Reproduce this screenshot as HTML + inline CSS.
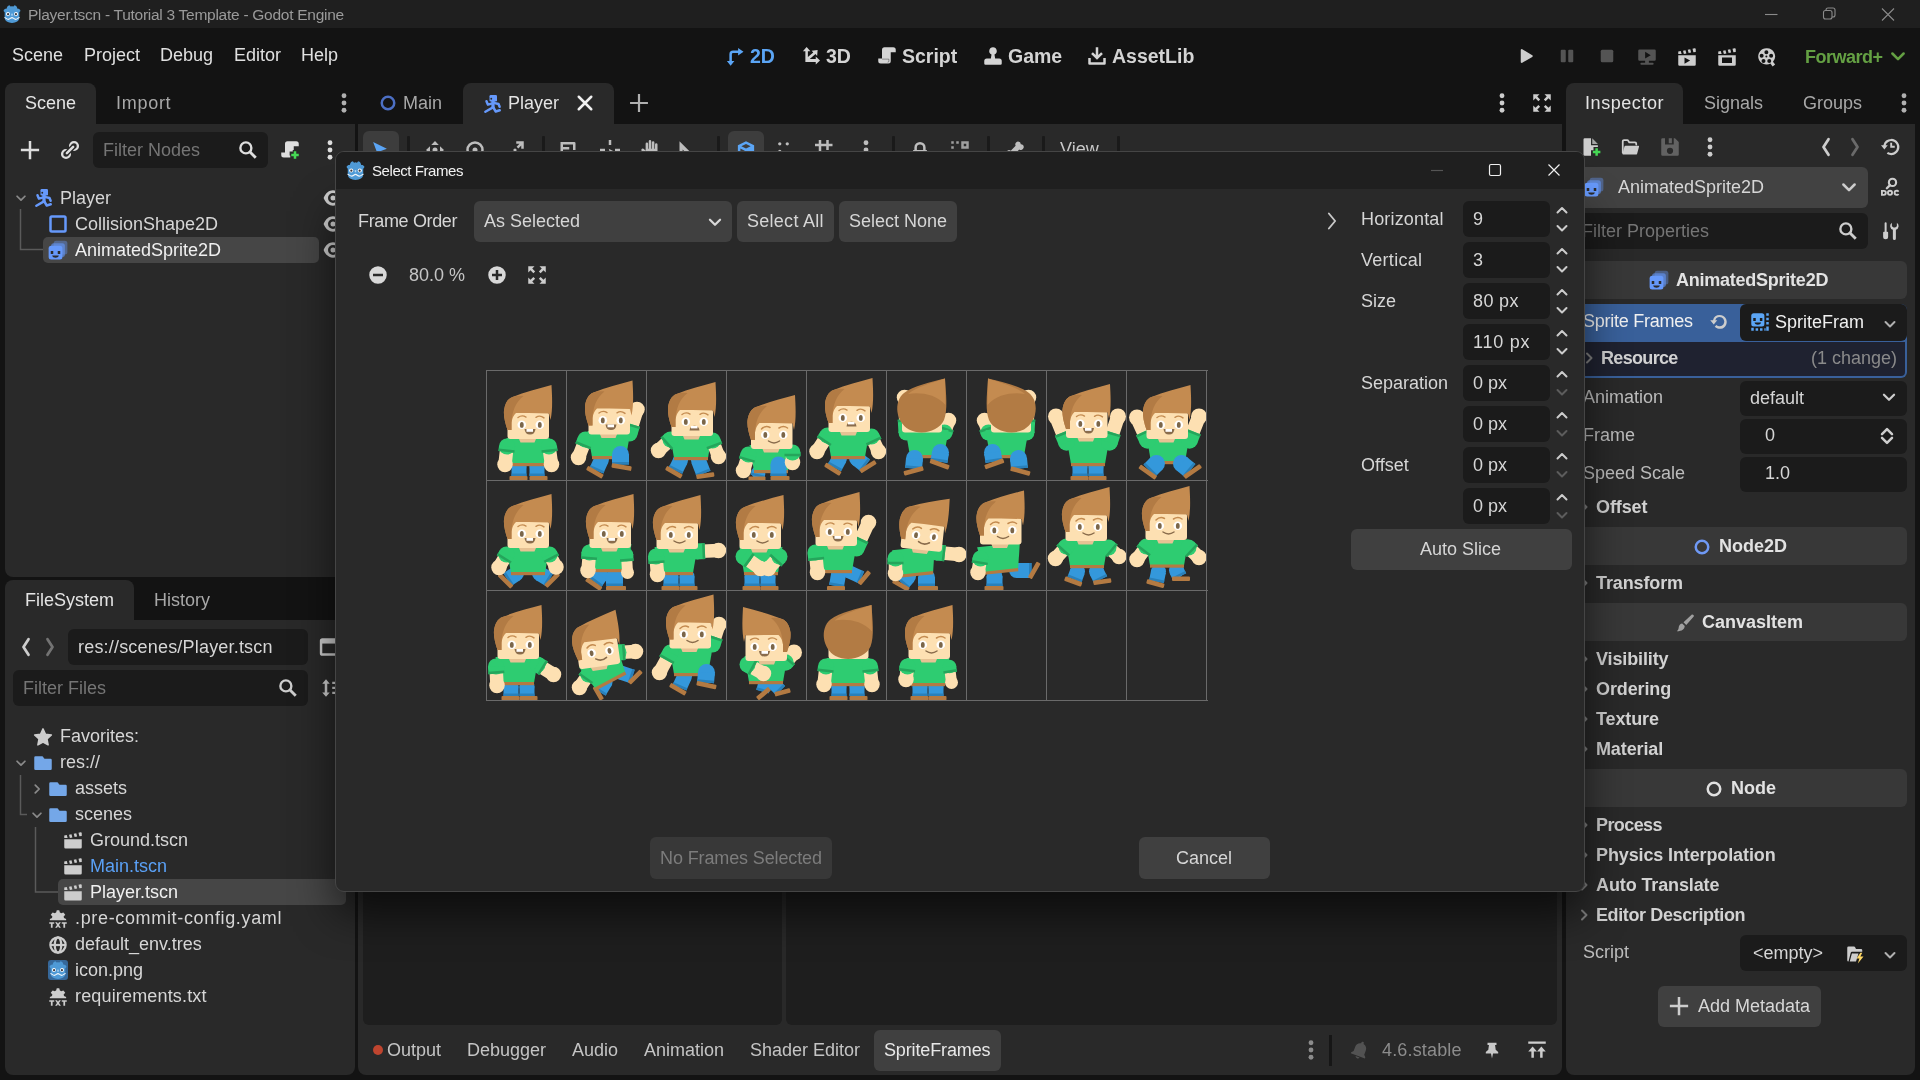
<!DOCTYPE html>
<html lang="en"><head><meta charset="utf-8"><title>Player.tscn - Tutorial 3 Template - Godot Engine</title>
<style>
html,body{margin:0;padding:0;background:#131313;}
body{width:1920px;height:1080px;overflow:hidden;font-family:"Liberation Sans",sans-serif;}
#root{position:relative;width:1920px;height:1080px;overflow:hidden;will-change:transform;}
.b,.ic,.t{position:absolute;box-sizing:border-box;}
.t{white-space:nowrap;line-height:24px;height:24px;font-size:18px;color:#dcdcdc;}
.title{font-size:15.5px;color:#9a9a9a;letter-spacing:-.27px;margin-top:.5px}
.dtitle{font-size:15px;color:#f2f2f2;}
.menu{font-size:18px;color:#e0e0e0;}
.mainbtn{font-size:19.5px;font-weight:bold;color:#d4d4d4;}
.tab{color:#a8a8a8;}
.tab.sel{color:#e4e4e4;}
.tree{color:#d6d6d6;}
.ph{color:#757575;}
.prop{color:#bcbcbc;}
.bot{color:#c4c4c4;}
.sec{font-weight:bold;color:#d2d2d2;letter-spacing:-.12px}
.catt{font-weight:bold;color:#e2e2e2;}
.input{background:#1b1b1b;border-radius:6px;}
.btn{background:#404040;border-radius:6px;}
.cat{background:#383838;border-radius:6px;}

</style></head><body>
<div id="root">
<div class="b " style="left:0px;top:0px;width:1920px;height:28px;background:#1f1f1f"></div>
<div class="ic" style="left:3px;top:5px;width:18px;height:18px"><svg width="18" height="18" viewBox="0 0 64 64" style="display:block"><path d="M2.500 22V17.500L8 13.500l4.500 0L14 9l3-5.500L23 1l4 4.500 5-1 5 1L41 1l6 2.500L50 9l1.500 4.500 4.500 0 5.500 4V22L58 26V45q0 9-7.500 14t-18.500 5t-18.500-5T6 45V26z" fill="#4f9ad6"/>
<path d="M5 44.500c5 0 8 6.500 14 6.500s8-6 13-6 7 6 13 6 9-6.500 14-6.500" fill="none" stroke="#f2f6fa" stroke-width="3.800"/>
<circle cx="17.600" cy="32" r="7" fill="#fff"/><circle cx="46.400" cy="32" r="7" fill="#fff"/>
<circle cx="18" cy="32.500" r="3.800" fill="#3a3a42"/><circle cx="46" cy="32.500" r="3.800" fill="#3a3a42"/>
<rect x="29.500" y="30" width="5" height="8" rx="2" fill="#b4d6f2"/></svg></div>
<div class="t title" style="left:28px;top:2px;">Player.tscn - Tutorial 3 Template - Godot Engine</div>
<svg class="ic" style="left:1760px;top:4px" width="150" height="22" viewBox="0 0 150 22"><g fill="none" stroke="#8a8a8a" stroke-width="1.100"><path d="M5 10.500h12.500"/><rect x="63.500" y="6.500" width="8.500" height="8.500" rx="2"/><path d="M66 6.500V6a2 2 0 0 1 2-2h5a2 2 0 0 1 2 2v5a2 2 0 0 1-2 2h-1"/><path d="M122 4.500l12 12M134 4.500l-12 12"/></g></svg>
<div class="b " style="left:0px;top:28px;width:1920px;height:1052px;background:#131313"></div>
<div class="t menu" style="left:12px;top:43px;">Scene</div>
<div class="t menu" style="left:84px;top:43px;">Project</div>
<div class="t menu" style="left:160px;top:43px;">Debug</div>
<div class="t menu" style="left:234px;top:43px;">Editor</div>
<div class="t menu" style="left:301px;top:43px;">Help</div>
<div class="ic" style="left:725.0px;top:46.0px;width:20px;height:20px;"><svg width="20" height="20" viewBox="0 0 16 16" style="display:block;"><path d="M10.500 1.500L14.800 4.500l-4.300 3V5.500H6.500a1 1 0 0 0-1 1v5.500h2L4.500 15.700 1.500 12h2V6.500a3 3 0 0 1 3-3h4z" fill="#5ba5f5"/></svg></div>
<div class="t mainbtn" style="left:750px;top:44px;color:#5ba5f5">2D</div>
<div class="ic" style="left:801.0px;top:46.0px;width:20px;height:20px;"><svg width="20" height="20" viewBox="0 0 16 16" style="display:block;"><path d="M4.500.800L7.500 4.200h-2v4.600l4.300-3.600-1.300-1.500 4.800-.6-.4 4.800-1.300-1.500-4.600 3.900h4.800v-2L15.200 11.500l-3.400 3.200v-2H3.500V4.200h-2z" fill="#d4d4d4"/></svg></div>
<div class="t mainbtn" style="left:826px;top:44px;">3D</div>
<div class="ic" style="left:877.0px;top:46.0px;width:20px;height:20px;"><svg width="20" height="20" viewBox="0 0 16 16" style="display:block;"><path d="M6 1a2 2 0 0 0-2 2v7H1v2a2 2 0 0 0 2 2h6a2 2 0 0 0 2-2V5h4V3a2 2 0 0 0-2-2z" fill="#d4d4d4"/><path d="M4 10.500h5.500V12a1 1 0 0 1-1 1" fill="none" stroke="#131313" stroke-width=".6" opacity=".5"/></svg></div>
<div class="t mainbtn" style="left:902px;top:44px;">Script</div>
<div class="ic" style="left:983.0px;top:46.0px;width:20px;height:20px;"><svg width="20" height="20" viewBox="0 0 16 16" style="display:block;"><path d="M8 1a3 3 0 0 0-1.200 5.750L6.300 10H3a2 2 0 0 0-2 2v2a1 1 0 0 0 1 1h12a1 1 0 0 0 1-1v-2a2 2 0 0 0-2-2H9.700l-.5-3.250A3 3 0 0 0 8 1z" fill="#d4d4d4"/></svg></div>
<div class="t mainbtn" style="left:1008px;top:44px;">Game</div>
<div class="ic" style="left:1087.0px;top:46.0px;width:20px;height:20px;"><svg width="20" height="20" viewBox="0 0 16 16" style="display:block;"><path d="M7 1h2v6.200l2.300-2.300 1.400 1.400L8 11 3.300 6.300l1.400-1.400L7 7.200zM1 9.500h2V13h10V9.500h2V14a1 1 0 0 1-1 1H2a1 1 0 0 1-1-1z" fill="#d4d4d4"/></svg></div>
<div class="t mainbtn" style="left:1112px;top:44px;">AssetLib</div>
<div class="ic" style="left:1515.5px;top:46.0px;width:20px;height:20px;"><svg width="20" height="20" viewBox="0 0 16 16" style="display:block;"><path d="M3.800 3.300a.8.800 0 0 1 1.200-.7l8 4.700a.8.800 0 0 1 0 1.400l-8 4.700a.8.800 0 0 1-1.200-.7z" fill="#cdcdcd"/></svg></div>
<div class="ic" style="left:1556.5px;top:46.0px;width:20px;height:20px;opacity:0.35;"><svg width="20" height="20" viewBox="0 0 16 16" style="display:block;"><rect x="3" y="3" width="4" height="10" rx=".8" fill="#cdcdcd"/><rect x="9" y="3" width="4" height="10" rx=".8" fill="#cdcdcd"/></svg></div>
<div class="ic" style="left:1596.5px;top:46.0px;width:20px;height:20px;opacity:0.35;"><svg width="20" height="20" viewBox="0 0 16 16" style="display:block;"><rect x="3" y="3" width="10" height="10" rx="1.200" fill="#cdcdcd"/></svg></div>
<div class="ic" style="left:1636.5px;top:47.0px;width:20px;height:20px;opacity:0.35;"><svg width="20" height="20" viewBox="0 0 16 16" style="display:block;"><path d="M2 2a1 1 0 0 0-1 1v7a1 1 0 0 0 1 1h4.500v1.500H3.500a.8.800 0 0 0 0 1.600h9a.8.800 0 0 0 0-1.600H9.500V11H14a1 1 0 0 0 1-1V3a1 1 0 0 0-1-1zm4.500 1.800l4.500 2.700-4.500 2.700z" fill="#cdcdcd"/></svg></div>
<div class="ic" style="left:1676.5px;top:47.0px;width:20px;height:20px;"><svg width="20" height="20" viewBox="0 0 16 16" style="display:block;"><path d="M1 6.500h14V14a1 1 0 0 1-1 1H2a1 1 0 0 1-1-1zm5 1.800v5l4.500-2.500zM1 5.500v-2l2-.4.700 2.400zm3.800-2.600l2-.4.700 2.600-2 .4zm3.800-.8l2-.4.700 2.600-2 .4zm3.800-.8l1.600-.3a.8.800 0 0 1 1 .7v2.300l-1.900.2z" fill="#cdcdcd"/></svg></div>
<div class="ic" style="left:1716.5px;top:47.0px;width:20px;height:20px;"><svg width="20" height="20" viewBox="0 0 16 16" style="display:block;"><path d="M1 6.500h14V14a1 1 0 0 1-1 1H2a1 1 0 0 1-1-1zm3 1.800v4.400h8V8.300zM1 5.500v-2l2-.4.700 2.400zm3.800-2.600l2-.4.700 2.600-2 .4zm3.800-.8l2-.4.700 2.600-2 .4zm3.800-.8l1.600-.3a.8.800 0 0 1 1 .7v2.300l-1.900.2z" fill="#cdcdcd"/></svg></div>
<div class="ic" style="left:1757.0px;top:47.0px;width:20px;height:20px;"><svg width="20" height="20" viewBox="0 0 16 16" style="display:block;"><path d="M7.500 1a6.500 6.500 0 1 0 3.200 12.150l1.800 2.350 2-1.500-1.700-2.200A6.500 6.500 0 0 0 7.500 1zm0 1.500a1.600 1.600 0 1 1 0 3.200 1.600 1.600 0 0 1 0-3.200zM3.700 5.300a1.600 1.600 0 1 1 0 3.200 1.600 1.600 0 0 1 0-3.200zm7.600 0a1.600 1.600 0 1 1 0 3.200 1.600 1.600 0 0 1 0-3.200zM7.500 6.700a.8.800 0 1 1 0 1.600.8.800 0 0 1 0-1.600zM5.200 9.500a1.600 1.600 0 1 1 0 3.200 1.600 1.600 0 0 1 0-3.200zm4.600 0a1.600 1.600 0 1 1 0 3.200 1.600 1.600 0 0 1 0-3.200z" fill="#cdcdcd"/></svg></div>
<div class="t mainbtn" style="left:1805px;top:44.5px;letter-spacing:-0.503px;font-size:18px;color:#64a043">Forward+</div>
<div class="ic" style="left:1887.5px;top:46.0px;width:20px;height:20px;"><svg width="20" height="20" viewBox="0 0 16 16" style="display:block;"><path d="M3.5 6l4.500 4.500L12.500 6" fill="none" stroke="#64a043" stroke-width="2" stroke-linecap="round" stroke-linejoin="round"/></svg></div>
<div class="b " style="left:5px;top:124px;width:350px;height:453px;background:#292929;border-radius:0 0 8px 8px"></div>
<div class="b " style="left:5px;top:83px;width:91px;height:42px;background:#292929;border-radius:8px 8px 0 0"></div>
<div class="t tab sel" style="left:25px;top:91px;">Scene</div>
<div class="t tab" style="left:116px;top:91px;letter-spacing:0.717px;">Import</div>
<div class="ic" style="left:333.5px;top:93.0px;width:20px;height:20px;"><svg width="20" height="20" viewBox="0 0 16 16" style="display:block;"><circle cx="8" cy="2.200" r="1.950" fill="#b0b0b0"/><circle cx="8" cy="8" r="1.950" fill="#b0b0b0"/><circle cx="8" cy="13.800" r="1.950" fill="#b0b0b0"/></svg></div>
<div class="ic" style="left:20.0px;top:140.0px;width:20px;height:20px;"><svg width="20" height="20" viewBox="0 0 16 16" style="display:block;"><path d="M7 .700v6.300H.700v2H7v6.300h2V9h6.300V7H9V.700z" fill="#dedede"/></svg></div>
<div class="ic" style="left:60.0px;top:140.0px;width:20px;height:20px;"><svg width="20" height="20" viewBox="0 0 16 16" style="display:block;"><circle cx="11.200" cy="4.800" r="3.100" fill="none" stroke="#dedede" stroke-width="1.900"/><circle cx="4.800" cy="11.200" r="3.100" fill="none" stroke="#dedede" stroke-width="1.900"/><path d="M5.500 10.500l5-5" stroke="#292929" stroke-width="4.200" stroke-linecap="round"/><path d="M5.500 10.500l5-5" stroke="#dedede" stroke-width="2" stroke-linecap="round"/></svg></div>
<div class="b input" style="left:93px;top:132px;width:175px;height:36px;"></div>
<div class="t ph" style="left:103px;top:138px;">Filter Nodes</div>
<div class="ic" style="left:237.5px;top:140.0px;width:20px;height:20px;"><svg width="20" height="20" viewBox="0 0 16 16" style="display:block;"><circle cx="6.300" cy="6.300" r="4.400" fill="none" stroke="#dedede" stroke-width="1.900"/><path d="M9.600 9.600l4.600 4.600" stroke="#dedede" stroke-width="2.300"/></svg></div>
<div class="ic" style="left:280.0px;top:140.0px;width:20px;height:20px;"><svg width="20" height="20" viewBox="0 0 16 16" style="display:block;"><path d="M6 1a2 2 0 0 0-2 2v7H1v2a2 2 0 0 0 2 2h5.200v-1.700H7.700v-3.100h2.500V8h.8V5h4V3a2 2 0 0 0-2-2z" fill="#dedede"/><path d="M11 9v2H9v2h2v2h2v-2h2v-2h-2V9z" fill="#45d754"/></svg></div>
<div class="ic" style="left:320.0px;top:140.0px;width:20px;height:20px;"><svg width="20" height="20" viewBox="0 0 16 16" style="display:block;"><circle cx="8" cy="2.200" r="1.950" fill="#dedede"/><circle cx="8" cy="8" r="1.950" fill="#dedede"/><circle cx="8" cy="13.800" r="1.950" fill="#dedede"/></svg></div>
<svg class="ic" style="left:15px;top:205px" width="30" height="50"><path d="M5.500 4v40.500H28M5.500 18.500h" fill="none" stroke="#5a5a5a" stroke-width="1.500"/></svg>
<div class="b " style="left:43px;top:237px;width:276px;height:26px;background:#464646;border-radius:5px"></div>
<div class="ic" style="left:13.5px;top:191.0px;width:14px;height:14px;"><svg width="14" height="14" viewBox="0 0 16 16" style="display:block;"><path d="M3.5 6l4.500 4.500L12.500 6" fill="none" stroke="#8a8a8a" stroke-width="2" stroke-linecap="round" stroke-linejoin="round"/></svg></div>
<div class="ic" style="left:33.5px;top:187.0px;width:20px;height:20px;"><svg width="20" height="20" viewBox="0 0 16 16" style="display:block;"><rect x="5.200" y="1.600" width="6" height="5.200" rx="1" fill="#6699fb"/><circle cx="6.600" cy="4.600" r=".75" fill="#292929"/><g fill="none" stroke="#6699fb" stroke-width="2" stroke-linecap="round" stroke-linejoin="round"><path d="M8 6.500V11.500" stroke-width="2.600"/><path d="M7.500 8.300L3.900 9.300 2.800 6.600"/><path d="M8.500 7.900l3.900.9.900 2.200"/><path d="M8 11.500L1.900 15"/><path d="M8.200 11.500l2 3.300 3.200-1"/></g></svg></div>
<div class="t tree" style="left:60px;top:186px;">Player</div>
<div class="ic" style="left:48.0px;top:213.5px;width:20px;height:20px;"><svg width="20" height="20" viewBox="0 0 16 16" style="display:block;"><rect x="2" y="2" width="12" height="12" rx="1" fill="none" stroke="#6699fb" stroke-width="2"/></svg></div>
<div class="t tree" style="left:75px;top:212px;">CollisionShape2D</div>
<div class="ic" style="left:48.0px;top:239.5px;width:20px;height:20px;"><svg width="20" height="20" viewBox="0 0 16 16" style="display:block;"><rect x="4.500" y=".500" width="11" height="11" rx="2" fill="#6699fb" opacity=".4"/><rect x="2.500" y="2.500" width="11" height="11" rx="2" fill="#6699fb" opacity=".6"/><rect x=".500" y="4.500" width="11" height="11" rx="2" fill="#6699fb"/><path d="M2.200 8.800h2v2.400h-2zm5.600 0h2v2.400h-2zM3.300 12.400h5.400c-.3 1.100-1.400 1.800-2.700 1.800s-2.400-.7-2.700-1.800z" fill="#2b2b2b"/></svg></div>
<div class="t tree" style="left:75px;top:238px;color:#f0f0f0">AnimatedSprite2D</div>
<div class="ic" style="left:323.0px;top:188.0px;width:20px;height:20px;"><svg width="20" height="20" viewBox="0 0 16 16" style="display:block;"><path fill-rule="evenodd" d="M.500 8C2 4 5 1.850 8 1.850S14 4 15.500 8C14 12 11 14.150 8 14.150S2 12 .500 8zM8 4a4 4 0 1 0 0 8 4 4 0 0 0 0-8zM8 6a2 2 0 1 1 0 4 2 2 0 0 1 0-4z" fill="#cdcdcd"/></svg></div>
<div class="ic" style="left:323.0px;top:214.0px;width:20px;height:20px;"><svg width="20" height="20" viewBox="0 0 16 16" style="display:block;"><path fill-rule="evenodd" d="M.500 8C2 4 5 1.850 8 1.850S14 4 15.500 8C14 12 11 14.150 8 14.150S2 12 .500 8zM8 4a4 4 0 1 0 0 8 4 4 0 0 0 0-8zM8 6a2 2 0 1 1 0 4 2 2 0 0 1 0-4z" fill="#cdcdcd"/></svg></div>
<div class="ic" style="left:323.0px;top:240.0px;width:20px;height:20px;"><svg width="20" height="20" viewBox="0 0 16 16" style="display:block;"><path fill-rule="evenodd" d="M.500 8C2 4 5 1.850 8 1.850S14 4 15.500 8C14 12 11 14.150 8 14.150S2 12 .500 8zM8 4a4 4 0 1 0 0 8 4 4 0 0 0 0-8zM8 6a2 2 0 1 1 0 4 2 2 0 0 1 0-4z" fill="#cdcdcd"/></svg></div>
<div class="b " style="left:5px;top:620px;width:350px;height:455px;background:#292929;border-radius:0 0 8px 8px"></div>
<div class="b " style="left:5px;top:580px;width:129px;height:42px;background:#292929;border-radius:8px 8px 0 0"></div>
<div class="t tab sel" style="left:25px;top:588px;">FileSystem</div>
<div class="t tab" style="left:154px;top:588px;">History</div>
<div class="ic" style="left:15.5px;top:637.0px;width:20px;height:20px;"><svg width="20" height="20" viewBox="0 0 16 16" style="display:block;"><path d="M10 1.800L6 8l4 6.200" fill="none" stroke="#cdcdcd" stroke-width="2.200" stroke-linecap="round" stroke-linejoin="round"/></svg></div>
<div class="ic" style="left:39.5px;top:637.0px;width:20px;height:20px;opacity:0.45;"><svg width="20" height="20" viewBox="0 0 16 16" style="display:block;"><path d="M6 1.800L10 8l-4 6.200" fill="none" stroke="#cdcdcd" stroke-width="2.200" stroke-linecap="round" stroke-linejoin="round"/></svg></div>
<div class="b input" style="left:68px;top:629px;width:240px;height:36px;"></div>
<div class="t tree" style="left:78px;top:635px;letter-spacing:0.192px;">res://scenes/Player.tscn</div>
<div class="ic" style="left:319.0px;top:636.0px;width:22px;height:22px;"><svg width="22" height="22" viewBox="0 0 16 16" style="display:block;"><rect x="1.500" y="2.500" width="13" height="11" rx="1" fill="none" stroke="#cdcdcd" stroke-width="1.800"/><path d="M1.500 2.500h13v3h-13z" fill="#cdcdcd"/></svg></div>
<div class="b input" style="left:13px;top:670px;width:295px;height:36px;"></div>
<div class="t ph" style="left:23px;top:676px;">Filter Files</div>
<div class="ic" style="left:277.5px;top:678.0px;width:20px;height:20px;"><svg width="20" height="20" viewBox="0 0 16 16" style="display:block;"><circle cx="6.300" cy="6.300" r="4.400" fill="none" stroke="#cdcdcd" stroke-width="1.900"/><path d="M9.600 9.600l4.600 4.600" stroke="#cdcdcd" stroke-width="2.300"/></svg></div>
<div class="ic" style="left:321.0px;top:678.0px;width:20px;height:20px;"><svg width="20" height="20" viewBox="0 0 16 16" style="display:block;"><path d="M4 1L1 4.500h2v7H1L4 15l3-3.500H5v-7h2zM9 3h6v1.800H9zm0 4h6v1.800H9zm0 4h6v1.800H9z" fill="#cdcdcd"/></svg></div>
<svg class="ic" style="left:15px;top:770px" width="50" height="130"><g fill="none" stroke="#5a5a5a" stroke-width="1.500"><path d="M5.500 5v39.500H12"/><path d="M20.500 57v65H43"/></g></svg>
<div class="b " style="left:58px;top:879px;width:288px;height:26px;background:#464646;border-radius:5px"></div>
<div class="ic" style="left:33.0px;top:726.5px;width:20px;height:20px;"><svg width="20" height="20" viewBox="0 0 16 16" style="display:block;"><path d="M8 1.500l2 4.300 4.700.6-3.500 3.200.9 4.700L8 12l-4.100 2.300.9-4.700-3.500-3.200 4.700-.6z" fill="#cdcdcd" stroke="#cdcdcd" stroke-width="1.200" stroke-linejoin="round"/></svg></div>
<div class="t tree" style="left:60px;top:724px;">Favorites:</div>
<div class="ic" style="left:13.5px;top:755.5px;width:14px;height:14px;"><svg width="14" height="14" viewBox="0 0 16 16" style="display:block;"><path d="M3.5 6l4.500 4.500L12.500 6" fill="none" stroke="#8a8a8a" stroke-width="2" stroke-linecap="round" stroke-linejoin="round"/></svg></div>
<div class="ic" style="left:33.0px;top:752.5px;width:20px;height:20px;"><svg width="20" height="20" viewBox="0 0 16 16" style="display:block;"><path d="M2 2.500a1 1 0 0 0-1 1v9a1 1 0 0 0 1 1h12a1 1 0 0 0 1-1v-7a1 1 0 0 0-1-1H9.500a1 1 0 0 1-.9-.5l-.4-.9a1 1 0 0 0-.9-.6z" fill="#74a7e8"/></svg></div>
<div class="t tree" style="left:60px;top:750px;">res://</div>
<div class="ic" style="left:29.5px;top:781.5px;width:14px;height:14px;"><svg width="14" height="14" viewBox="0 0 16 16" style="display:block;"><path d="M6 3.500l4.500 4.500L6 12.500" fill="none" stroke="#8a8a8a" stroke-width="2" stroke-linecap="round" stroke-linejoin="round"/></svg></div>
<div class="ic" style="left:48.0px;top:778.5px;width:20px;height:20px;"><svg width="20" height="20" viewBox="0 0 16 16" style="display:block;"><path d="M2 2.500a1 1 0 0 0-1 1v9a1 1 0 0 0 1 1h12a1 1 0 0 0 1-1v-7a1 1 0 0 0-1-1H9.500a1 1 0 0 1-.9-.5l-.4-.9a1 1 0 0 0-.9-.6z" fill="#74a7e8"/></svg></div>
<div class="t tree" style="left:75px;top:776px;">assets</div>
<div class="ic" style="left:29.5px;top:807.5px;width:14px;height:14px;"><svg width="14" height="14" viewBox="0 0 16 16" style="display:block;"><path d="M3.5 6l4.500 4.500L12.500 6" fill="none" stroke="#8a8a8a" stroke-width="2" stroke-linecap="round" stroke-linejoin="round"/></svg></div>
<div class="ic" style="left:48.0px;top:804.5px;width:20px;height:20px;"><svg width="20" height="20" viewBox="0 0 16 16" style="display:block;"><path d="M2 2.500a1 1 0 0 0-1 1v9a1 1 0 0 0 1 1h12a1 1 0 0 0 1-1v-7a1 1 0 0 0-1-1H9.500a1 1 0 0 1-.9-.5l-.4-.9a1 1 0 0 0-.9-.6z" fill="#74a7e8"/></svg></div>
<div class="t tree" style="left:75px;top:802px;">scenes</div>
<div class="ic" style="left:63.0px;top:830.5px;width:20px;height:20px;"><svg width="20" height="20" viewBox="0 0 16 16" style="display:block;"><path d="M1 6.500h14V13a1 1 0 0 1-1 1H2a1 1 0 0 1-1-1zM1 5.500v-2l2-.4.700 2.400zm3.800-2.600l2-.4.700 2.600-2 .4zm3.800-.8l2-.4.700 2.600-2 .4zm3.800-.8l1.600-.3a.8.8 0 0 1 1 .7v2.300l-1.900.2z" fill="#cdcdcd"/></svg></div>
<div class="t tree" style="left:90px;top:828px;">Ground.tscn</div>
<div class="ic" style="left:63.0px;top:856.5px;width:20px;height:20px;"><svg width="20" height="20" viewBox="0 0 16 16" style="display:block;"><path d="M1 6.500h14V13a1 1 0 0 1-1 1H2a1 1 0 0 1-1-1zM1 5.500v-2l2-.4.700 2.400zm3.800-2.600l2-.4.700 2.600-2 .4zm3.800-.8l2-.4.700 2.600-2 .4zm3.800-.8l1.600-.3a.8.8 0 0 1 1 .7v2.300l-1.900.2z" fill="#cdcdcd"/></svg></div>
<div class="t tree" style="left:90px;top:854px;color:#5aa0f5">Main.tscn</div>
<div class="ic" style="left:63.0px;top:882.5px;width:20px;height:20px;"><svg width="20" height="20" viewBox="0 0 16 16" style="display:block;"><path d="M1 6.500h14V13a1 1 0 0 1-1 1H2a1 1 0 0 1-1-1zM1 5.500v-2l2-.4.700 2.400zm3.800-2.600l2-.4.700 2.600-2 .4zm3.800-.8l2-.4.700 2.600-2 .4zm3.800-.8l1.600-.3a.8.8 0 0 1 1 .7v2.300l-1.900.2z" fill="#cdcdcd"/></svg></div>
<div class="t tree" style="left:90px;top:880px;color:#f0f0f0">Player.tscn</div>
<div class="ic" style="left:48.0px;top:908.5px;width:20px;height:20px;"><svg width="20" height="20" viewBox="0 0 16 16" style="display:block;"><path d="M7 1l-.5 1.800a4.500 4.500 0 0 0-1 .6L3.700 2.800l-1.500 1.800L3.500 6a4.500 4.500 0 0 0-.3 1.100L1.500 8v1h13V8l-1.700-.9A4.500 4.500 0 0 0 12.500 6l1.300-1.400-1.500-1.800-1.800.6a4.500 4.500 0 0 0-1-.6L9 1z" fill="#cdcdcd"/><path d="M1 10.500h4v1.300H3.700V15H2.300v-3.200H1zm4.700 0h1.500l.8 1.300.8-1.300h1.500l-1.500 2.300L10.300 15H8.800L8 13.700 7.200 15H5.700l1.500-2.200zm5.300 0h4v1.300h-1.300V15h-1.400v-3.200H11z" fill="#cdcdcd"/></svg></div>
<div class="t tree" style="left:75px;top:906px;letter-spacing:0.657px;">.pre-commit-config.yaml</div>
<div class="ic" style="left:48.0px;top:934.5px;width:20px;height:20px;"><svg width="20" height="20" viewBox="0 0 16 16" style="display:block;"><g fill="none" stroke="#cdcdcd" stroke-width="1.800"><circle cx="8" cy="8" r="6.100"/><ellipse cx="8" cy="8" rx="2.600" ry="6.100"/><path d="M2 8h12"/></g></svg></div>
<div class="t tree" style="left:75px;top:932px;">default_env.tres</div>
<div class="b " style="left:48px;top:960px;width:20px;height:20px;background:#36689a;border-radius:3px"></div>
<div class="ic" style="left:49px;top:961px;width:18px;height:18px"><svg width="18" height="18" viewBox="0 0 64 64" style="display:block"><path d="M2.500 22V17.500L8 13.500l4.500 0L14 9l3-5.500L23 1l4 4.500 5-1 5 1L41 1l6 2.500L50 9l1.500 4.500 4.500 0 5.500 4V22L58 26V45q0 9-7.500 14t-18.500 5t-18.500-5T6 45V26z" fill="#4f9ad6"/>
<path d="M5 44.500c5 0 8 6.500 14 6.500s8-6 13-6 7 6 13 6 9-6.500 14-6.500" fill="none" stroke="#f2f6fa" stroke-width="3.800"/>
<circle cx="17.600" cy="32" r="7" fill="#fff"/><circle cx="46.400" cy="32" r="7" fill="#fff"/>
<circle cx="18" cy="32.500" r="3.800" fill="#3a3a42"/><circle cx="46" cy="32.500" r="3.800" fill="#3a3a42"/>
<rect x="29.500" y="30" width="5" height="8" rx="2" fill="#b4d6f2"/></svg></div>
<div class="t tree" style="left:75px;top:958px;">icon.png</div>
<div class="ic" style="left:48.0px;top:986.5px;width:20px;height:20px;"><svg width="20" height="20" viewBox="0 0 16 16" style="display:block;"><path d="M7 1l-.5 1.800a4.500 4.500 0 0 0-1 .6L3.700 2.800l-1.500 1.800L3.500 6a4.500 4.500 0 0 0-.3 1.100L1.500 8v1h13V8l-1.700-.9A4.500 4.500 0 0 0 12.500 6l1.300-1.400-1.500-1.800-1.800.6a4.500 4.500 0 0 0-1-.6L9 1z" fill="#cdcdcd"/><path d="M1 10.500h4v1.300H3.700V15H2.300v-3.200H1zm4.700 0h1.500l.8 1.300.8-1.300h1.500l-1.500 2.300L10.300 15H8.800L8 13.700 7.200 15H5.700l1.500-2.200zm5.300 0h4v1.300h-1.300V15h-1.400v-3.200H11z" fill="#cdcdcd"/></svg></div>
<div class="t tree" style="left:75px;top:984px;letter-spacing:0.163px;">requirements.txt</div>
<div class="ic" style="left:377.5px;top:93.0px;width:20px;height:20px;"><svg width="20" height="20" viewBox="0 0 16 16" style="display:block;"><circle cx="8" cy="8" r="5" fill="none" stroke="#4c6fc4" stroke-width="2"/></svg></div>
<div class="t tab" style="left:403px;top:91px;">Main</div>
<div class="b " style="left:463px;top:83px;width:151px;height:42px;background:#292929;border-radius:8px 8px 0 0"></div>
<div class="ic" style="left:482.5px;top:93.0px;width:20px;height:20px;"><svg width="20" height="20" viewBox="0 0 16 16" style="display:block;"><rect x="5.200" y="1.600" width="6" height="5.200" rx="1" fill="#6699fb"/><circle cx="6.600" cy="4.600" r=".75" fill="#292929"/><g fill="none" stroke="#6699fb" stroke-width="2" stroke-linecap="round" stroke-linejoin="round"><path d="M8 6.500V11.500" stroke-width="2.600"/><path d="M7.500 8.300L3.900 9.300 2.800 6.600"/><path d="M8.500 7.900l3.900.9.900 2.200"/><path d="M8 11.500L1.900 15"/><path d="M8.200 11.500l2 3.300 3.200-1"/></g></svg></div>
<div class="t tab sel" style="left:508px;top:91px;">Player</div>
<div class="ic" style="left:574.5px;top:93.0px;width:20px;height:20px;"><svg width="20" height="20" viewBox="0 0 16 16" style="display:block;"><path d="M3 3l10 10M13 3L3 13" fill="none" stroke="#f0f0f0" stroke-width="2" stroke-linecap="round"/></svg></div>
<div class="ic" style="left:628.0px;top:92.0px;width:22px;height:22px;"><svg width="22" height="22" viewBox="0 0 16 16" style="display:block;"><path d="M8 1.500v13M1.500 8h13" fill="none" stroke="#b0b0b0" stroke-width="1.600"/></svg></div>
<div class="ic" style="left:1491.5px;top:93.0px;width:20px;height:20px;"><svg width="20" height="20" viewBox="0 0 16 16" style="display:block;"><circle cx="8" cy="2.200" r="1.950" fill="#cdcdcd"/><circle cx="8" cy="8" r="1.950" fill="#cdcdcd"/><circle cx="8" cy="13.800" r="1.950" fill="#cdcdcd"/></svg></div>
<div class="ic" style="left:1532.0px;top:93.0px;width:20px;height:20px;"><svg width="20" height="20" viewBox="0 0 16 16" style="display:block;"><path d="M1 1h5L4.200 2.800l2.300 2.300-1.400 1.400-2.300-2.300L1 6zm14 0v5l-1.800-1.800-2.300 2.300-1.400-1.400 2.300-2.300L10 1zM1 15v-5l1.800 1.800 2.300-2.300 1.400 1.400-2.300 2.300L6 15zm14 0h-5l1.800-1.800-2.300-2.300 1.400-1.400 2.300 2.300L15 10z" fill="#cdcdcd"/></svg></div>
<div class="b " style="left:358px;top:124px;width:1204px;height:951px;background:#292929;border-radius:0 0 8px 8px"></div>
<div class="b " style="left:363px;top:131px;width:36px;height:36px;background:#3d3d3d;border-radius:6px"></div>
<div class="ic" style="left:370.0px;top:140.0px;width:20px;height:20px;"><svg width="20" height="20" viewBox="0 0 16 16" style="display:block;"><path d="M2.500 1.500l11 5.500-4.800 1.700L7 13.500z" fill="#5ba5f5"/></svg></div>
<div class="b " style="left:407px;top:136px;width:3px;height:28px;background:#1a1a1a;border-radius:1px"></div>
<div class="b " style="left:542px;top:136px;width:3px;height:28px;background:#1a1a1a;border-radius:1px"></div>
<div class="b " style="left:717px;top:136px;width:3px;height:28px;background:#1a1a1a;border-radius:1px"></div>
<div class="b " style="left:892px;top:136px;width:3px;height:28px;background:#1a1a1a;border-radius:1px"></div>
<div class="b " style="left:987px;top:136px;width:3px;height:28px;background:#1a1a1a;border-radius:1px"></div>
<div class="b " style="left:1042px;top:136px;width:3px;height:28px;background:#1a1a1a;border-radius:1px"></div>
<div class="b " style="left:1117px;top:136px;width:3px;height:28px;background:#1a1a1a;border-radius:1px"></div>
<div class="ic" style="left:424.5px;top:140.0px;width:20px;height:20px;"><svg width="20" height="20" viewBox="0 0 16 16" style="display:block;"><path d="M8 .800l3 3.200H5zM.800 8l3.200-3v6zM15.200 8l-3.200 3V5zM8 15.200l-3-3.200h6z" fill="#bdbdbd"/><circle cx="8" cy="8" r="2" fill="#bdbdbd"/></svg></div>
<div class="ic" style="left:465.0px;top:140.0px;width:20px;height:20px;"><svg width="20" height="20" viewBox="0 0 16 16" style="display:block;"><circle cx="8" cy="8" r="6" fill="none" stroke="#bdbdbd" stroke-width="2"/><circle cx="8" cy="8" r="2" fill="#bdbdbd"/></svg></div>
<div class="ic" style="left:505.0px;top:140.0px;width:20px;height:20px;"><svg width="20" height="20" viewBox="0 0 16 16" style="display:block;"><path d="M9 1h6v6h-2V4.400l-2.300 2.300-1.400-1.400L11.600 3H9z" fill="#bdbdbd"/><circle cx="8" cy="8" r="1.300" fill="#bdbdbd"/><circle cx="4.500" cy="11.500" r="1.300" fill="#bdbdbd"/><circle cx="2" cy="14" r="1.300" fill="#bdbdbd"/></svg></div>
<div class="ic" style="left:558.0px;top:140.0px;width:20px;height:20px;"><svg width="20" height="20" viewBox="0 0 16 16" style="display:block;"><path d="M2 1.500h11a1 1 0 0 1 1 1V8h-2V3.500H4v2h5v2H4V11h4v2H3a1 1 0 0 1-1-1zM9 9l6.500 3.200-2.800 1L11.500 16z" fill="#bdbdbd"/></svg></div>
<div class="ic" style="left:600.0px;top:140.0px;width:20px;height:20px;"><svg width="20" height="20" viewBox="0 0 16 16" style="display:block;"><path d="M7 0h2v4H7zM0 7h4v2H0zm12 0h4v2h-4zM7 12h2v4H7zM7 7l7 3.500-3 1L9.500 15z" fill="#bdbdbd"/></svg></div>
<div class="ic" style="left:640.0px;top:140.0px;width:20px;height:20px;"><svg width="20" height="20" viewBox="0 0 16 16" style="display:block;"><path d="M7 1a1 1 0 0 1 2 0v6h.500V2a1 1 0 0 1 2 0v5h.500V3.500a1 1 0 0 1 2 0V11a4 4 0 0 1-4 4H8.500A4.500 4.500 0 0 1 4.700 13L1.200 8.500a1.200 1.200 0 0 1 1.900-1.400L4.500 8.500V3a1 1 0 0 1 2 0v4H7z" fill="#bdbdbd"/></svg></div>
<div class="ic" style="left:677.0px;top:140.0px;width:20px;height:20px;"><svg width="20" height="20" viewBox="0 0 16 16" style="display:block;"><path d="M2 1l13 13H2zm2.500 6.500V11.500h4z" fill="#bdbdbd" fill-rule="evenodd"/></svg></div>
<div class="b " style="left:728px;top:131px;width:36px;height:36px;background:#3d3d3d;border-radius:6px"></div>
<div class="ic" style="left:735.5px;top:140.0px;width:20px;height:20px;"><svg width="20" height="20" viewBox="0 0 16 16" style="display:block;"><path d="M8 1L1.500 4.200v7.600L8 15l6.500-3.200V4.200zm0 2.200l3.700 1.800L8 6.800 4.300 5zM3.500 6.800l3.500 1.700v3.900l-3.500-1.700z" fill="#5ba5f5" fill-rule="evenodd"/></svg></div>
<div class="ic" style="left:776.0px;top:140.0px;width:20px;height:20px;"><svg width="20" height="20" viewBox="0 0 16 16" style="display:block;"><circle cx="3" cy="3" r="1.300" fill="#bdbdbd"/><circle cx="9" cy="3" r="1.300" fill="#bdbdbd"/><circle cx="3" cy="9" r="1.300" fill="#bdbdbd"/><path d="M7 15v-2a4 4 0 0 1 8 0v2h-2.300v-2a1.700 1.700 0 0 0-3.400 0v2z" fill="#bdbdbd"/></svg></div>
<div class="ic" style="left:815.0px;top:140.0px;width:20px;height:20px;"><svg width="20" height="20" viewBox="0 0 16 16" style="display:block;"><path d="M3 0h2v3h4V0h2v3h3v2h-3v3h-2V5H5v4h3v2H5v3H3v-3H0V9h3V5H0V3h3zM7 15v-2a4 4 0 0 1 8 0v2h-2.300v-2a1.700 1.700 0 0 0-3.400 0v2z" fill="#bdbdbd"/></svg></div>
<div class="ic" style="left:855.5px;top:140.0px;width:20px;height:20px;"><svg width="20" height="20" viewBox="0 0 16 16" style="display:block;"><circle cx="8" cy="2.200" r="1.950" fill="#bdbdbd"/><circle cx="8" cy="8" r="1.950" fill="#bdbdbd"/><circle cx="8" cy="13.800" r="1.950" fill="#bdbdbd"/></svg></div>
<div class="ic" style="left:910.0px;top:140.0px;width:20px;height:20px;"><svg width="20" height="20" viewBox="0 0 16 16" style="display:block;"><path d="M8 1.500A4.500 4.500 0 0 0 3.500 6v2H2.500v6.500h11V8h-1V6A4.500 4.500 0 0 0 8 1.500zm0 2A2.500 2.500 0 0 1 10.500 6v2h-5V6A2.500 2.500 0 0 1 8 3.500z" fill="#bdbdbd"/></svg></div>
<div class="ic" style="left:950.0px;top:140.0px;width:20px;height:20px;"><svg width="20" height="20" viewBox="0 0 16 16" style="display:block;"><path d="M1 1h2v2H1zm4 0h2v2H5zm4 0h6v6H9zm2 2v2h2V3zM1 5h2v2H1zm0 4h7v6H1zM9 9h4v2H9z" fill="#bdbdbd" opacity=".8"/></svg></div>
<div class="ic" style="left:1005.0px;top:140.0px;width:20px;height:20px;"><svg width="20" height="20" viewBox="0 0 16 16" style="display:block;"><path d="M10.500 1.200a2.300 2.300 0 0 0-2 3.400L4.600 8.500a2.300 2.300 0 1 0-1.300 4.200 2.300 2.300 0 1 0 4.200-1.300l3.900-3.900a2.300 2.300 0 1 0 1.300-4.200 2.300 2.300 0 0 0-2.200-2.100z" fill="#bdbdbd"/></svg></div>
<div class="t tree" style="left:1060px;top:137px;color:#c8c8c8">View</div>
<div class="b " style="left:363px;top:700px;width:419px;height:325px;background:#1e1e1e;border-radius:6px"></div>
<div class="b " style="left:786px;top:700px;width:771px;height:325px;background:#1e1e1e;border-radius:6px"></div>
<div class="b " style="left:373px;top:1045px;width:10px;height:10px;background:#bf452f;border-radius:5px"></div>
<div class="t bot" style="left:387px;top:1038px;">Output</div>
<div class="t bot" style="left:467px;top:1038px;">Debugger</div>
<div class="t bot" style="left:572px;top:1038px;">Audio</div>
<div class="t bot" style="left:644px;top:1038px;">Animation</div>
<div class="t bot" style="left:750px;top:1038px;">Shader Editor</div>
<div class="b " style="left:874px;top:1030px;width:127px;height:41px;background:#404040;border-radius:6px"></div>
<div class="t bot" style="left:884px;top:1038px;letter-spacing:-0.139px;color:#e8e8e8">SpriteFrames</div>
<div class="ic" style="left:1301.0px;top:1039.5px;width:20px;height:20px;"><svg width="20" height="20" viewBox="0 0 16 16" style="display:block;"><circle cx="8" cy="2.200" r="1.950" fill="#8c8c8c"/><circle cx="8" cy="8" r="1.950" fill="#8c8c8c"/><circle cx="8" cy="13.800" r="1.950" fill="#8c8c8c"/></svg></div>
<div class="b " style="left:1329px;top:1035px;width:3px;height:31px;background:#161616"></div>
<div class="ic" style="left:1349.5px;top:1040.0px;width:20px;height:20px;opacity:0.25;"><svg width="20" height="20" viewBox="0 0 16 16" style="display:block;"><path d="M8 1a1 1 0 0 0-1 1v.6A4.500 4.500 0 0 0 3.500 7v3.500L2 12v1h12v-1l-1.500-1.500V7A4.500 4.500 0 0 0 9 2.600V2a1 1 0 0 0-1-1zM6.300 13.800a1.800 1.800 0 0 0 3.400 0z" fill="#cdcdcd" transform="rotate(20 8 8)"/></svg></div>
<div class="t bot" style="left:1382px;top:1038px;letter-spacing:0.160px;color:#8c8c8c">4.6.stable</div>
<div class="ic" style="left:1482.5px;top:1041.0px;width:18px;height:18px;"><svg width="18" height="18" viewBox="0 0 16 16" style="display:block;"><path d="M4 1.500h8v2h-1.300l.6 4.200 2.200 2v1.500H8.900L8 15.500l-.9-4.300H2.500V9.700l2.200-2 .6-4.200H4z" fill="#c8c8c8"/></svg></div>
<div class="ic" style="left:1527.0px;top:1039.0px;width:20px;height:20px;"><svg width="20" height="20" viewBox="0 0 16 16" style="display:block;"><path d="M1 2h14v1.800H1zM4.500 6L8 10H5.500v5h-2v-5H1zm7 0L15 10h-2.500v5h-2v-5H8z" fill="#cdcdcd"/></svg></div>
<div class="b " style="left:1566px;top:124px;width:349px;height:951px;background:#292929;border-radius:0 0 8px 8px"></div>
<div class="b " style="left:1566px;top:83px;width:117px;height:42px;background:#292929;border-radius:8px 8px 0 0"></div>
<div class="t tab sel" style="left:1585px;top:91px;letter-spacing:0.557px;">Inspector</div>
<div class="t tab" style="left:1704px;top:91px;">Signals</div>
<div class="t tab" style="left:1803px;top:91px;">Groups</div>
<div class="ic" style="left:1893.5px;top:93.0px;width:20px;height:20px;"><svg width="20" height="20" viewBox="0 0 16 16" style="display:block;"><circle cx="8" cy="2.200" r="1.950" fill="#b0b0b0"/><circle cx="8" cy="8" r="1.950" fill="#b0b0b0"/><circle cx="8" cy="13.800" r="1.950" fill="#b0b0b0"/></svg></div>
<div class="ic" style="left:1581.0px;top:137.0px;width:20px;height:20px;"><svg width="20" height="20" viewBox="0 0 16 16" style="display:block;"><path d="M3 1a1 1 0 0 0-1 1v12a1 1 0 0 0 1 1h5v-4.500h2V8h3.500V6.500H8V1z" fill="#cdcdcd"/><path d="M9 1v4.500h4.500z" fill="#cdcdcd" opacity=".75"/><path d="M11.500 9v2h-2v2h2v2h2v-2h2v-2h-2V9z" fill="#45d754"/></svg></div>
<div class="ic" style="left:1620.0px;top:137.0px;width:20px;height:20px;"><svg width="20" height="20" viewBox="0 0 16 16" style="display:block;"><path d="M2.200 12.500V3.500a1 1 0 0 1 1-1h2.600a1 1 0 0 1 .8.500l.8 1.300H12a1 1 0 0 1 1 1V6" fill="none" stroke="#cdcdcd" stroke-width="1.400" stroke-linecap="round"/><path d="M5.300 7h9.300a.6.600 0 0 1 .6.800l-1.500 5.500a1 1 0 0 1-1 .7H2.500a.5.500 0 0 1-.5-.6l1.500-5.600a1 1 0 0 1 1-.8z" fill="#cdcdcd"/></svg></div>
<div class="ic" style="left:1660.0px;top:137.0px;width:20px;height:20px;opacity:0.35;"><svg width="20" height="20" viewBox="0 0 16 16" style="display:block;"><path d="M2 1a1 1 0 0 0-1 1v12a1 1 0 0 0 1 1h12a1 1 0 0 0 1-1V4l-3-3h-1v5H4V1zm5 0v4h2.500V1zM8 8.500a2.500 2.500 0 1 1 0 5 2.500 2.500 0 0 1 0-5z" fill="#cdcdcd"/></svg></div>
<div class="ic" style="left:1700.0px;top:137.0px;width:20px;height:20px;"><svg width="20" height="20" viewBox="0 0 16 16" style="display:block;"><circle cx="8" cy="2.200" r="1.950" fill="#cdcdcd"/><circle cx="8" cy="8" r="1.950" fill="#cdcdcd"/><circle cx="8" cy="13.800" r="1.950" fill="#cdcdcd"/></svg></div>
<div class="ic" style="left:1815.5px;top:137.0px;width:20px;height:20px;"><svg width="20" height="20" viewBox="0 0 16 16" style="display:block;"><path d="M10 1.800L6 8l4 6.200" fill="none" stroke="#cdcdcd" stroke-width="2.200" stroke-linecap="round" stroke-linejoin="round"/></svg></div>
<div class="ic" style="left:1844.5px;top:137.0px;width:20px;height:20px;opacity:0.4;"><svg width="20" height="20" viewBox="0 0 16 16" style="display:block;"><path d="M6 1.800L10 8l-4 6.200" fill="none" stroke="#cdcdcd" stroke-width="2.200" stroke-linecap="round" stroke-linejoin="round"/></svg></div>
<div class="ic" style="left:1879.5px;top:137.0px;width:20px;height:20px;"><svg width="20" height="20" viewBox="0 0 16 16" style="display:block;"><path d="M9 1.500a6.500 6.500 0 0 0-6.300 5H.8l2.700 3.500 2.700-3.500H4.500A4.700 4.700 0 1 1 9 12.700a4.700 4.700 0 0 1-2.600-.8l-1 1.500A6.500 6.500 0 1 0 9 1.500zM8.200 4.500v4h3.600V7H9.700V4.500z" fill="#cdcdcd"/></svg></div>
<div class="b " style="left:1572px;top:167px;width:296px;height:41px;background:#424242;border-radius:6px"></div>
<div class="ic" style="left:1584.0px;top:177.0px;width:20px;height:20px;"><svg width="20" height="20" viewBox="0 0 16 16" style="display:block;"><rect x="4.500" y=".500" width="11" height="11" rx="2" fill="#6699fb" opacity=".4"/><rect x="2.500" y="2.500" width="11" height="11" rx="2" fill="#6699fb" opacity=".6"/><rect x=".500" y="4.500" width="11" height="11" rx="2" fill="#6699fb"/><path d="M2.200 8.800h2v2.400h-2zm5.600 0h2v2.400h-2zM3.300 12.400h5.400c-.3 1.100-1.400 1.800-2.700 1.800s-2.400-.7-2.700-1.800z" fill="#2b2b2b"/></svg></div>
<div class="t tree" style="left:1618px;top:175px;">AnimatedSprite2D</div>
<div class="ic" style="left:1838.5px;top:177.0px;width:20px;height:20px;"><svg width="20" height="20" viewBox="0 0 16 16" style="display:block;"><path d="M3.5 6l4.500 4.500L12.500 6" fill="none" stroke="#cdcdcd" stroke-width="2" stroke-linecap="round" stroke-linejoin="round"/></svg></div>
<div class="ic" style="left:1880.0px;top:177.0px;width:20px;height:20px;"><svg width="20" height="20" viewBox="0 0 16 16" style="display:block;"><circle cx="10" cy="4.300" r="2.900" fill="none" stroke="#cdcdcd" stroke-width="1.700"/><path d="M8 6.500L5.500 9" stroke="#cdcdcd" stroke-width="1.900" stroke-linecap="round"/><path d="M.800 10.300h2.300a2.300 2.300 0 0 1 0 4.600H.800zm1.500 1.400v1.800h.7a.9.900 0 0 0 0-1.800zM8 10.200a2.400 2.400 0 1 1 0 4.800 2.400 2.400 0 0 1 0-4.800zm0 1.500a.9.900 0 1 0 0 1.800.9.900 0 0 0 0-1.800zm5.300-1.500c.9 0 1.700.4 2.100 1.100l-1.200.8a1 1 0 0 0-.9-.4.9.900 0 0 0 0 1.800 1 1 0 0 0 .9-.4l1.200.8c-.4.700-1.200 1.100-2.100 1.100a2.400 2.400 0 1 1 0-4.800z" fill="#cdcdcd"/></svg></div>
<div class="b input" style="left:1572px;top:213px;width:296px;height:36px;"></div>
<div class="t ph" style="left:1582px;top:219px;">Filter Properties</div>
<div class="ic" style="left:1838.0px;top:221.0px;width:20px;height:20px;"><svg width="20" height="20" viewBox="0 0 16 16" style="display:block;"><circle cx="6.300" cy="6.300" r="4.400" fill="none" stroke="#cdcdcd" stroke-width="1.900"/><path d="M9.600 9.600l4.600 4.600" stroke="#cdcdcd" stroke-width="2.300"/></svg></div>
<div class="ic" style="left:1880.0px;top:221.0px;width:20px;height:20px;"><svg width="20" height="20" viewBox="0 0 16 16" style="display:block;"><path d="M4.500 1a.8.800 0 0 1 .8.800V8.500h.5a.7.700 0 0 1 .7.700v3.300a2 2 0 0 1-4 0V9.200a.7.700 0 0 1 .7-.7h.5V1.800a.8.800 0 0 1 .8-.8zM9.500 1.300v2.900l1.400 1h1.200l1.400-1V1.300a3.200 3.200 0 0 1-.8 5.700V14a1.200 1.200 0 0 1-2.400 0V7a3.200 3.200 0 0 1-.8-5.700z" fill="#cdcdcd"/></svg></div>
<div class="b cat" style="left:1572px;top:261px;width:335px;height:38px;"></div>
<div class="ic" style="left:1649.0px;top:270.0px;width:20px;height:20px;"><svg width="20" height="20" viewBox="0 0 16 16" style="display:block;"><rect x="4.500" y=".500" width="11" height="11" rx="2" fill="#6699fb" opacity=".4"/><rect x="2.500" y="2.500" width="11" height="11" rx="2" fill="#6699fb" opacity=".6"/><rect x=".500" y="4.500" width="11" height="11" rx="2" fill="#6699fb"/><path d="M2.200 8.800h2v2.400h-2zm5.600 0h2v2.400h-2zM3.300 12.400h5.400c-.3 1.100-1.400 1.800-2.700 1.800s-2.400-.7-2.700-1.800z" fill="#2b2b2b"/></svg></div>
<div class="t catt" style="left:1676px;top:268px;letter-spacing:-0.242px;">AnimatedSprite2D</div>
<div class="b " style="left:1572px;top:304px;width:335px;height:74px;background:#39609a;border-radius:6px"></div>
<div class="b " style="left:1572px;top:342px;width:333px;height:34px;background:#1f2230;border-radius:0 0 4px 4px"></div>
<div class="t tree" style="left:1583px;top:309px;letter-spacing:-0.253px;color:#f0f0f0">Sprite Frames</div>
<div class="ic" style="left:1709.0px;top:312.0px;width:20px;height:20px;"><svg width="20" height="20" viewBox="0 0 16 16" style="display:block;"><path d="M8.500 2.500a5.500 5.500 0 0 0-5.300 4H1l2.800 3.500L6.600 6.500H5a3.700 3.700 0 1 1 .9 3.900l-1.300 1.300A5.500 5.500 0 1 0 8.500 2.500z" fill="#cdcdcd"/></svg></div>
<div class="b input" style="left:1740px;top:304px;width:167px;height:37px;border-radius:6px"></div>
<div class="ic" style="left:1750.0px;top:312.0px;width:20px;height:20px;"><svg width="20" height="20" viewBox="0 0 16 16" style="display:block;"><rect x="1" y="1" width="10.500" height="10.500" rx="2" fill="#5ba5f5"/><path d="M2.600 4.800h2v2.400h-2zm5.300 0h2v2.400h-2zM3.600 8.300h5.300c-.3 1.100-1.400 1.800-2.650 1.800s-2.350-.7-2.650-1.800z" fill="#1b1b1b"/><path d="M13 1h2v2h-2zm0 3.500h2v2h-2zm0 3.500h2v2h-2zm0 3.500h2v3.500h-2zM1 12.500h2V15H1zm3.500.5h2v2h-2zm3.500 0h2v2H8zm3.500 0h1v2h-1z" fill="#5ba5f5"/></svg></div>
<div class="t tree" style="left:1775px;top:310px;color:#f0f0f0">SpriteFram</div>
<div class="ic" style="left:1882.0px;top:316.0px;width:16px;height:16px;"><svg width="16" height="16" viewBox="0 0 16 16" style="display:block;"><path d="M3.5 6l4.500 4.500L12.500 6" fill="none" stroke="#b0b0b0" stroke-width="2" stroke-linecap="round" stroke-linejoin="round"/></svg></div>
<div class="ic" style="left:1581.0px;top:350.0px;width:16px;height:16px;"><svg width="16" height="16" viewBox="0 0 16 16" style="display:block;"><path d="M6 3.500l4.500 4.500L6 12.500" fill="none" stroke="#808080" stroke-width="2" stroke-linecap="round" stroke-linejoin="round"/></svg></div>
<div class="t sec" style="left:1601px;top:346px;letter-spacing:-0.677px;">Resource</div>
<div class="t tree" style="left:1811px;top:346px;color:#8a8a8a">(1 change)</div>
<div class="t prop" style="left:1583px;top:385px;">Animation</div>
<div class="b input" style="left:1740px;top:381px;width:167px;height:35px;"></div>
<div class="t tree" style="left:1750px;top:386px;">default</div>
<div class="ic" style="left:1880.0px;top:388.0px;width:18px;height:18px;"><svg width="18" height="18" viewBox="0 0 16 16" style="display:block;"><path d="M3.5 6l4.500 4.500L12.500 6" fill="none" stroke="#cdcdcd" stroke-width="2" stroke-linecap="round" stroke-linejoin="round"/></svg></div>
<div class="t prop" style="left:1583px;top:423px;">Frame</div>
<div class="b input" style="left:1740px;top:419px;width:167px;height:35px;"></div>
<div class="t tree" style="left:1765px;top:423px;">0</div>
<div class="ic" style="left:1877.0px;top:426.0px;width:20px;height:20px;"><svg width="20" height="20" viewBox="0 0 16 16" style="display:block;"><path d="M4 6.500L8 2.500l4 4M4 9.500l4 4 4-4" fill="none" stroke="#cdcdcd" stroke-width="2" stroke-linecap="round" stroke-linejoin="round"/></svg></div>
<div class="t prop" style="left:1583px;top:461px;">Speed Scale</div>
<div class="b input" style="left:1740px;top:457px;width:167px;height:35px;"></div>
<div class="t tree" style="left:1765px;top:461px;">1.0</div>
<div class="ic" style="left:1576.0px;top:499.0px;width:16px;height:16px;"><svg width="16" height="16" viewBox="0 0 16 16" style="display:block;"><path d="M6 3.500l4.500 4.500L6 12.500" fill="none" stroke="#808080" stroke-width="2" stroke-linecap="round" stroke-linejoin="round"/></svg></div>
<div class="t sec" style="left:1596px;top:495px;">Offset</div>
<div class="b cat" style="left:1572px;top:527px;width:335px;height:38px;"></div>
<div class="ic" style="left:1691.5px;top:536.5px;width:20px;height:20px;"><svg width="20" height="20" viewBox="0 0 16 16" style="display:block;"><circle cx="8" cy="8" r="5" fill="none" stroke="#6f99f5" stroke-width="2"/></svg></div>
<div class="t catt" style="left:1719px;top:534px;">Node2D</div>
<div class="ic" style="left:1576.0px;top:575.0px;width:16px;height:16px;"><svg width="16" height="16" viewBox="0 0 16 16" style="display:block;"><path d="M6 3.500l4.500 4.500L6 12.500" fill="none" stroke="#808080" stroke-width="2" stroke-linecap="round" stroke-linejoin="round"/></svg></div>
<div class="t sec" style="left:1596px;top:571px;">Transform</div>
<div class="b cat" style="left:1572px;top:603px;width:335px;height:38px;"></div>
<div class="ic" style="left:1675.0px;top:612.5px;width:20px;height:20px;"><svg width="20" height="20" viewBox="0 0 16 16" style="display:block;"><path d="M13.500 1.200a1.200 1.200 0 0 1 1.500 1.600L9 9.500 6.800 7.300zM5.800 8.300l2 2c-.2 2.500-2 4.200-6.300 4.200 1.500-1 1.300-2.300 1.600-3.700.3-1.300 1.200-2.300 2.700-2.500z" fill="#a0a0a0"/></svg></div>
<div class="t catt" style="left:1702px;top:610px;">CanvasItem</div>
<div class="ic" style="left:1576.0px;top:651.0px;width:16px;height:16px;"><svg width="16" height="16" viewBox="0 0 16 16" style="display:block;"><path d="M6 3.500l4.500 4.500L6 12.500" fill="none" stroke="#808080" stroke-width="2" stroke-linecap="round" stroke-linejoin="round"/></svg></div>
<div class="t sec" style="left:1596px;top:647px;">Visibility</div>
<div class="ic" style="left:1576.0px;top:681.0px;width:16px;height:16px;"><svg width="16" height="16" viewBox="0 0 16 16" style="display:block;"><path d="M6 3.500l4.500 4.500L6 12.500" fill="none" stroke="#808080" stroke-width="2" stroke-linecap="round" stroke-linejoin="round"/></svg></div>
<div class="t sec" style="left:1596px;top:677px;">Ordering</div>
<div class="ic" style="left:1576.0px;top:711.0px;width:16px;height:16px;"><svg width="16" height="16" viewBox="0 0 16 16" style="display:block;"><path d="M6 3.500l4.500 4.500L6 12.500" fill="none" stroke="#808080" stroke-width="2" stroke-linecap="round" stroke-linejoin="round"/></svg></div>
<div class="t sec" style="left:1596px;top:707px;">Texture</div>
<div class="ic" style="left:1576.0px;top:741.0px;width:16px;height:16px;"><svg width="16" height="16" viewBox="0 0 16 16" style="display:block;"><path d="M6 3.500l4.500 4.500L6 12.500" fill="none" stroke="#808080" stroke-width="2" stroke-linecap="round" stroke-linejoin="round"/></svg></div>
<div class="t sec" style="left:1596px;top:737px;">Material</div>
<div class="b cat" style="left:1572px;top:769px;width:335px;height:38px;"></div>
<div class="ic" style="left:1703.5px;top:778.5px;width:20px;height:20px;"><svg width="20" height="20" viewBox="0 0 16 16" style="display:block;"><circle cx="8" cy="8" r="5" fill="none" stroke="#e0e0e0" stroke-width="2"/></svg></div>
<div class="t catt" style="left:1731px;top:776px;">Node</div>
<div class="ic" style="left:1576.0px;top:817.0px;width:16px;height:16px;"><svg width="16" height="16" viewBox="0 0 16 16" style="display:block;"><path d="M6 3.500l4.500 4.500L6 12.500" fill="none" stroke="#808080" stroke-width="2" stroke-linecap="round" stroke-linejoin="round"/></svg></div>
<div class="t sec" style="left:1596px;top:813px;letter-spacing:-0.592px;">Process</div>
<div class="ic" style="left:1576.0px;top:847.0px;width:16px;height:16px;"><svg width="16" height="16" viewBox="0 0 16 16" style="display:block;"><path d="M6 3.500l4.500 4.500L6 12.500" fill="none" stroke="#808080" stroke-width="2" stroke-linecap="round" stroke-linejoin="round"/></svg></div>
<div class="t sec" style="left:1596px;top:843px;">Physics Interpolation</div>
<div class="ic" style="left:1576.0px;top:877.0px;width:16px;height:16px;"><svg width="16" height="16" viewBox="0 0 16 16" style="display:block;"><path d="M6 3.500l4.500 4.500L6 12.500" fill="none" stroke="#808080" stroke-width="2" stroke-linecap="round" stroke-linejoin="round"/></svg></div>
<div class="t sec" style="left:1596px;top:873px;">Auto Translate</div>
<div class="ic" style="left:1576.0px;top:907.0px;width:16px;height:16px;"><svg width="16" height="16" viewBox="0 0 16 16" style="display:block;"><path d="M6 3.500l4.500 4.500L6 12.500" fill="none" stroke="#808080" stroke-width="2" stroke-linecap="round" stroke-linejoin="round"/></svg></div>
<div class="t sec" style="left:1596px;top:903px;letter-spacing:-0.383px;">Editor Description</div>
<div class="t prop" style="left:1583px;top:940px;">Script</div>
<div class="b input" style="left:1740px;top:935px;width:167px;height:36px;"></div>
<div class="t tree" style="left:1753px;top:941px;">&lt;empty&gt;</div>
<div class="ic" style="left:1846.0px;top:944.0px;width:20px;height:20px;"><svg width="20" height="20" viewBox="0 0 16 16" style="display:block;"><path d="M2 2a1 1 0 0 0-1 1v10a1 1 0 0 0 1 1l1.800-7a1 1 0 0 1 1-.8H13V5a1 1 0 0 0-1-1H8L7.300 2.600A1 1 0 0 0 6.400 2z" fill="#cdcdcd"/><path d="M5.300 7.500a.7.700 0 0 0-.7.500L3 14h5l2-6.500z" fill="#cdcdcd"/><path d="M11.500 7L8.500 11.500h2.200L9.500 15.500l4.500-5.500h-2.500L13 7z" fill="#ffd866"/></svg></div>
<div class="ic" style="left:1882.0px;top:947.0px;width:16px;height:16px;"><svg width="16" height="16" viewBox="0 0 16 16" style="display:block;"><path d="M3.5 6l4.500 4.500L12.500 6" fill="none" stroke="#b0b0b0" stroke-width="2" stroke-linecap="round" stroke-linejoin="round"/></svg></div>
<div class="b " style="left:1658px;top:986px;width:163px;height:41px;background:#404040;border-radius:6px"></div>
<div class="ic" style="left:1668.5px;top:996.0px;width:20px;height:20px;"><svg width="20" height="20" viewBox="0 0 16 16" style="display:block;"><path d="M7 .700v6.300H.700v2H7v6.300h2V9h6.300V7H9V.700z" fill="#cdcdcd"/></svg></div>
<div class="t tree" style="left:1698px;top:994px;">Add Metadata</div>
<div class="b " style="left:336px;top:211px;width:1248px;height:701px;background:rgba(0,0,0,.6);filter:blur(22px)"></div>
<div class="b " style="left:335px;top:151px;width:1250px;height:741px;background:#292929;border-radius:9px;border:1px solid #454545"></div>
<div class="b " style="left:336px;top:152px;width:1248px;height:37px;background:#1f1f1f;border-radius:8px 8px 0 0"></div>
<div class="ic" style="left:345.5px;top:160.5px;width:19px;height:19px"><svg width="19" height="19" viewBox="0 0 64 64" style="display:block"><path d="M2.500 22V17.500L8 13.500l4.500 0L14 9l3-5.500L23 1l4 4.500 5-1 5 1L41 1l6 2.500L50 9l1.500 4.500 4.500 0 5.500 4V22L58 26V45q0 9-7.500 14t-18.500 5t-18.500-5T6 45V26z" fill="#4f9ad6"/>
<path d="M5 44.500c5 0 8 6.500 14 6.500s8-6 13-6 7 6 13 6 9-6.500 14-6.500" fill="none" stroke="#f2f6fa" stroke-width="3.800"/>
<circle cx="17.600" cy="32" r="7" fill="#fff"/><circle cx="46.400" cy="32" r="7" fill="#fff"/>
<circle cx="18" cy="32.500" r="3.800" fill="#3a3a42"/><circle cx="46" cy="32.500" r="3.800" fill="#3a3a42"/>
<rect x="29.500" y="30" width="5" height="8" rx="2" fill="#b4d6f2"/></svg></div>
<div class="t dtitle" style="left:372px;top:159px;letter-spacing:-0.433px;">Select Frames</div>
<svg class="ic" style="left:1425px;top:158px" width="150" height="24" viewBox="0 0 150 24"><g fill="none" stroke-width="1.200"><path d="M6 12.500h12" stroke="#555"/><rect x="64.500" y="6.500" width="11" height="11" rx="1.500" stroke="#f0f0f0"/><path d="M123.500 6.500l11 11M134.500 6.500l-11 11" stroke="#f0f0f0"/></g></svg>
<div class="t tree" style="left:358px;top:209px;letter-spacing:-0.352px;">Frame Order</div>
<div class="b btn" style="left:474px;top:201px;width:258px;height:41px;"></div>
<div class="t tree" style="left:484px;top:209px;">As Selected</div>
<div class="ic" style="left:705.5px;top:212.5px;width:18px;height:18px;"><svg width="18" height="18" viewBox="0 0 16 16" style="display:block;"><path d="M3.5 6l4.500 4.500L12.500 6" fill="none" stroke="#d8d8d8" stroke-width="2" stroke-linecap="round" stroke-linejoin="round"/></svg></div>
<div class="b btn" style="left:737px;top:201px;width:97px;height:41px;"></div>
<div class="t tree" style="left:747px;top:209px;letter-spacing:0.273px;">Select All</div>
<div class="b btn" style="left:839px;top:201px;width:118px;height:41px;"></div>
<div class="t tree" style="left:849px;top:209px;">Select None</div>
<div class="ic" style="left:368.0px;top:265.0px;width:20px;height:20px;"><svg width="20" height="20" viewBox="0 0 16 16" style="display:block;"><path d="M8 1a7 7 0 1 0 0 14A7 7 0 0 0 8 1zM4 7h8v2H4z" fill="#d8d8d8"/></svg></div>
<div class="t tree" style="left:409px;top:262.5px;color:#c4c4c4">80.0 %</div>
<div class="ic" style="left:487.0px;top:265.0px;width:20px;height:20px;"><svg width="20" height="20" viewBox="0 0 16 16" style="display:block;"><path d="M8 1a7 7 0 1 0 0 14A7 7 0 0 0 8 1zM7 4h2v3h3v2H9v3H7V9H4V7h3z" fill="#d8d8d8"/></svg></div>
<div class="ic" style="left:527.0px;top:265.0px;width:20px;height:20px;"><svg width="20" height="20" viewBox="0 0 16 16" style="display:block;"><path d="M1 1h5L4.200 2.800l2.300 2.300-1.400 1.400-2.300-2.300L1 6zm14 0v5l-1.800-1.800-2.300 2.300-1.400-1.400 2.300-2.300L10 1zM1 15v-5l1.800 1.800 2.300-2.300 1.400 1.400-2.300 2.300L6 15zm14 0h-5l1.800-1.800-2.300-2.300 1.400-1.400 2.300 2.300L15 10z" fill="#cdcdcd"/></svg></div>
<svg class="ic" style="left:486px;top:370px" width="722" height="331" viewBox="0 0 722 331"><svg x="0.5" y="0.5" width="80" height="110" viewBox="0 0 80 110"><circle cx="32.5" cy="96" r="7.5" fill="#3498db"/><path d="M32.5 96L32.5 105.5" stroke="#3498db" stroke-width="15" fill="none"/><path d="M32.5 103L32.5 105.5" stroke="#2a80b9" stroke-width="15" fill="none"/><rect x="-9.5" y="0" width="18" height="4.6" rx="1" fill="#b37a42" transform="translate(32.5 105.5) rotate(0)"/><circle cx="50.5" cy="96" r="7.5" fill="#3498db"/><path d="M50.5 96L50.5 105.5" stroke="#3498db" stroke-width="15" fill="none"/><path d="M50.5 103L50.5 105.5" stroke="#2a80b9" stroke-width="15" fill="none"/><rect x="-7.5" y="0" width="18" height="4.6" rx="1" fill="#b37a42" transform="translate(50.5 105.5) rotate(0)"/><g transform="translate(0 0)"><polygon points="20,67.5 63,67.5 58.5,93.5 24.5,93.5" fill="#2ecc71"/><rect x="24.500" y="92.500" width="34" height="3.200" fill="#b37a42"/></g><path d="M20.5 76L18.5 94" stroke="#fde0b2" stroke-width="13.5" stroke-linecap="round" fill="none"/><circle cx="18.5" cy="94" r="7.75" fill="#fde0b2"/><circle cx="20.5" cy="76" r="8.0" fill="#2ecc71"/><path d="M20.5 76L19.9 81.4" stroke="#2ecc71" stroke-width="16.0" fill="none"/><path d="M20.2 78.9L19.9 81.4" stroke="#25a55b" stroke-width="16.0" fill="none"/><path d="M62.5 76L65 94" stroke="#fde0b2" stroke-width="13.5" stroke-linecap="round" fill="none"/><circle cx="65" cy="94" r="7.75" fill="#fde0b2"/><circle cx="62.5" cy="76" r="8.0" fill="#2ecc71"/><path d="M62.5 76L63.2 81.4" stroke="#2ecc71" stroke-width="16.0" fill="none"/><path d="M62.9 78.9L63.2 81.4" stroke="#25a55b" stroke-width="16.0" fill="none"/><g transform="translate(0 0)"><polygon points="31.500,66 50.500,66 48,72 34,72" fill="#e6c294"/><rect x="21" y="41.500" width="41.500" height="27" rx="3" fill="#fde0b2"/><path d="M65 14.500C65.500 25 66.500 38 64 49.500L62.500 43 42 42.500H29.500Q26 45.500 25 52V59.500H21C18.500 52 17 46 17.500 40C18.500 33 21 28.500 26 26.500C38 21.500 52 18 65 14.500Z" fill="#c48b50"/><path d="M26 26.500C21 28.500 18.500 33 17.500 40C17 46 18.500 52 21 59.500H25V52C25.500 41 29 32 37 25.500C33 25 29.500 25.300 26 26.500Z" fill="#b27b44"/><circle cx="35.3" cy="54.200" r="4.300" fill="#fff"/><ellipse cx="35.3" cy="54.400" rx="1.900" ry="2.900" fill="#7b6649"/><circle cx="53.3" cy="54.200" r="4.300" fill="#fff"/><ellipse cx="53.3" cy="54.400" rx="1.900" ry="2.900" fill="#7b6649"/><path d="M31.500 47q4-3 8-.4M49.500 46.800q4-2.600 8 .6" stroke="#c48b50" stroke-width="1.400" fill="none" stroke-linecap="round"/><path d="M38 58.500h11q-.6 5.600-5.500 5.600T38 58.500z" fill="#8a6c4c"/><rect x="40" y="58.500" width="6.500" height="2.800" fill="#fff"/></g></svg><svg x="80.5" y="0.5" width="80" height="110" viewBox="0 0 80 110"><circle cx="35" cy="89" r="7.5" fill="#3498db"/><path d="M35 89L30 100" stroke="#3498db" stroke-width="15" fill="none"/><path d="M31 97.7L30 100" stroke="#2a80b9" stroke-width="15" fill="none"/><rect x="-9.5" y="0" width="18" height="4.6" rx="1" fill="#b37a42" transform="translate(30 100) rotate(30)"/><g transform="translate(1 -7)"><polygon points="20,67.5 63,67.5 58.5,93.5 24.5,93.5" fill="#2ecc71"/><rect x="24.500" y="92.500" width="34" height="3.200" fill="#b37a42"/></g><circle cx="54" cy="84" r="8.5" fill="#3498db"/><path d="M54 84L54 94" stroke="#3498db" stroke-width="17" fill="none"/><path d="M54 91.5L54 94" stroke="#2a80b9" stroke-width="17" fill="none"/><rect x="-8.5" y="0" width="20" height="4.6" rx="1" fill="#b37a42" transform="translate(54 94) rotate(10)"/><path d="M19 69L12 87" stroke="#fde0b2" stroke-width="13.5" stroke-linecap="round" fill="none"/><circle cx="12" cy="87" r="7.75" fill="#fde0b2"/><circle cx="19" cy="69" r="8.0" fill="#2ecc71"/><path d="M19 69L16.3 75.8" stroke="#2ecc71" stroke-width="16.0" fill="none"/><path d="M17.2 73.5L16.3 75.8" stroke="#25a55b" stroke-width="16.0" fill="none"/><path d="M63 63L70.5 39" stroke="#fde0b2" stroke-width="13.5" stroke-linecap="round" fill="none"/><circle cx="70.5" cy="39" r="7.75" fill="#fde0b2"/><circle cx="63" cy="63" r="8.0" fill="#2ecc71"/><path d="M63 63L65.8 53.9" stroke="#2ecc71" stroke-width="16.0" fill="none"/><path d="M65.1 56.3L65.8 53.9" stroke="#25a55b" stroke-width="16.0" fill="none"/><g transform="translate(1 -4.5)"><polygon points="31.500,66 50.500,66 48,72 34,72" fill="#e6c294"/><rect x="21" y="41.500" width="41.500" height="27" rx="3" fill="#fde0b2"/><path d="M65 14.500C65.500 25 66.500 38 64 49.500L62.500 43 42 42.500H29.500Q26 45.500 25 52V59.500H21C18.500 52 17 46 17.500 40C18.500 33 21 28.500 26 26.500C38 21.500 52 18 65 14.500Z" fill="#c48b50"/><path d="M26 26.500C21 28.500 18.500 33 17.500 40C17 46 18.500 52 21 59.500H25V52C25.500 41 29 32 37 25.500C33 25 29.500 25.300 26 26.500Z" fill="#b27b44"/><circle cx="35.3" cy="54.200" r="4.300" fill="#fff"/><ellipse cx="35.3" cy="54.400" rx="1.900" ry="2.900" fill="#7b6649"/><circle cx="53.3" cy="54.200" r="4.300" fill="#fff"/><ellipse cx="53.3" cy="54.400" rx="1.900" ry="2.900" fill="#7b6649"/><path d="M31.500 47q4-3 8-.4M49.500 46.800q4-2.600 8 .6" stroke="#c48b50" stroke-width="1.400" fill="none" stroke-linecap="round"/><path d="M38 58.500h11q-.6 5.600-5.500 5.600T38 58.500z" fill="#8a6c4c"/><rect x="40" y="58.500" width="6.500" height="2.800" fill="#fff"/></g></svg><svg x="160.5" y="0.5" width="80" height="110" viewBox="0 0 80 110"><circle cx="34" cy="90" r="7.5" fill="#3498db"/><path d="M34 90L29 100" stroke="#3498db" stroke-width="15" fill="none"/><path d="M30.1 97.8L29 100" stroke="#2a80b9" stroke-width="15" fill="none"/><rect x="-9.5" y="0" width="18" height="4.6" rx="1" fill="#b37a42" transform="translate(29 100) rotate(30)"/><circle cx="52" cy="90" r="7.5" fill="#3498db"/><path d="M52 90L57 103" stroke="#3498db" stroke-width="15" fill="none"/><path d="M56.1 100.7L57 103" stroke="#2a80b9" stroke-width="15" fill="none"/><rect x="-7.5" y="0" width="18" height="4.6" rx="1" fill="#b37a42" transform="translate(57 103) rotate(-8)"/><g transform="translate(3 -6)"><polygon points="20,67.5 63,67.5 58.5,93.5 24.5,93.5" fill="#2ecc71"/><rect x="24.500" y="92.500" width="34" height="3.200" fill="#b37a42"/></g><path d="M24 69L12 80" stroke="#fde0b2" stroke-width="13.5" stroke-linecap="round" fill="none"/><circle cx="12" cy="80" r="7.75" fill="#fde0b2"/><circle cx="24" cy="69" r="8.0" fill="#2ecc71"/><path d="M24 69L19.4 73.2" stroke="#2ecc71" stroke-width="16.0" fill="none"/><path d="M21.3 71.5L19.4 73.2" stroke="#25a55b" stroke-width="16.0" fill="none"/><path d="M66 70L72 86" stroke="#fde0b2" stroke-width="13.5" stroke-linecap="round" fill="none"/><circle cx="72" cy="86" r="7.75" fill="#fde0b2"/><circle cx="66" cy="70" r="8.0" fill="#2ecc71"/><path d="M66 70L68.3 76.1" stroke="#2ecc71" stroke-width="16.0" fill="none"/><path d="M67.4 73.7L68.3 76.1" stroke="#25a55b" stroke-width="16.0" fill="none"/><g transform="translate(4 -3)"><polygon points="31.500,66 50.500,66 48,72 34,72" fill="#e6c294"/><rect x="21" y="41.500" width="41.500" height="27" rx="3" fill="#fde0b2"/><path d="M65 14.500C65.500 25 66.500 38 64 49.500L62.500 43 42 42.500H29.500Q26 45.500 25 52V59.500H21C18.500 52 17 46 17.500 40C18.500 33 21 28.500 26 26.500C38 21.500 52 18 65 14.500Z" fill="#c48b50"/><path d="M26 26.500C21 28.500 18.500 33 17.500 40C17 46 18.500 52 21 59.500H25V52C25.500 41 29 32 37 25.500C33 25 29.500 25.300 26 26.500Z" fill="#b27b44"/><circle cx="35.3" cy="54.200" r="4.300" fill="#fff"/><ellipse cx="35.3" cy="54.400" rx="1.900" ry="2.900" fill="#7b6649"/><circle cx="53.3" cy="54.200" r="4.300" fill="#fff"/><ellipse cx="53.3" cy="54.400" rx="1.900" ry="2.900" fill="#7b6649"/><path d="M31.500 47q4-3 8-.4M49.500 46.800q4-2.600 8 .6" stroke="#c48b50" stroke-width="1.400" fill="none" stroke-linecap="round"/><path d="M39 63q.5-4.800 5-4.800t5 4.800z" fill="#8a6c4c"/><rect x="40.500" y="58.500" width="6.500" height="2.400" fill="#fff"/></g></svg><svg x="240.5" y="0.5" width="80" height="110" viewBox="0 0 80 110"><circle cx="32" cy="102" r="7.0" fill="#3498db"/><path d="M32 102L31 106" stroke="#3498db" stroke-width="14" fill="none"/><path d="M31.6 103.6L31 106" stroke="#2a80b9" stroke-width="14" fill="none"/><rect x="-9" y="0" width="17" height="4.6" rx="1" fill="#b37a42" transform="translate(31 106) rotate(0)"/><g transform="translate(3 7)"><polygon points="20,67.5 63,67.5 58.5,93.5 24.5,93.5" fill="#2ecc71"/><rect x="24.500" y="92.500" width="34" height="3.200" fill="#b37a42"/></g><circle cx="52" cy="94" r="8.0" fill="#3498db"/><path d="M52 94L52 105.5" stroke="#3498db" stroke-width="16" fill="none"/><path d="M52 103L52 105.5" stroke="#2a80b9" stroke-width="16" fill="none"/><rect x="-8" y="0" width="19" height="4.6" rx="1" fill="#b37a42" transform="translate(52 105.5) rotate(0)"/><path d="M22 84L17 100" stroke="#fde0b2" stroke-width="13.5" stroke-linecap="round" fill="none"/><circle cx="17" cy="100" r="7.75" fill="#fde0b2"/><circle cx="22" cy="84" r="8.0" fill="#2ecc71"/><path d="M22 84L20.1 90.1" stroke="#2ecc71" stroke-width="16.0" fill="none"/><path d="M20.8 87.7L20.1 90.1" stroke="#25a55b" stroke-width="16.0" fill="none"/><path d="M66 82L66 92" stroke="#fde0b2" stroke-width="13.5" stroke-linecap="round" fill="none"/><circle cx="66" cy="92" r="7.75" fill="#fde0b2"/><circle cx="66" cy="82" r="8.0" fill="#2ecc71"/><path d="M66 82L66 85.8" stroke="#2ecc71" stroke-width="16.0" fill="none"/><path d="M66 83.3L66 85.8" stroke="#25a55b" stroke-width="16.0" fill="none"/><g transform="translate(3.5 10)"><polygon points="31.500,66 50.500,66 48,72 34,72" fill="#e6c294"/><rect x="21" y="41.500" width="41.500" height="27" rx="3" fill="#fde0b2"/><path d="M65 14.500C65.500 25 66.500 38 64 49.500L62.500 43 42 42.500H29.500Q26 45.500 25 52V59.500H21C18.500 52 17 46 17.500 40C18.500 33 21 28.500 26 26.500C38 21.500 52 18 65 14.500Z" fill="#c48b50"/><path d="M26 26.500C21 28.500 18.500 33 17.500 40C17 46 18.500 52 21 59.500H25V52C25.500 41 29 32 37 25.500C33 25 29.500 25.300 26 26.500Z" fill="#b27b44"/><circle cx="35.3" cy="54.200" r="4.300" fill="#fff"/><ellipse cx="35.3" cy="54.400" rx="1.900" ry="2.900" fill="#7b6649"/><circle cx="53.3" cy="54.200" r="4.300" fill="#fff"/><ellipse cx="53.3" cy="54.400" rx="1.900" ry="2.900" fill="#7b6649"/><path d="M31.500 48.500q4-4 8.500-1.500M49 47.500q4.500-2.800 8.500 0" stroke="#c48b50" stroke-width="1.500" fill="none" stroke-linecap="round"/><path d="M38.500 60.500q5.500 3.800 11 0" stroke="#8a6c4c" stroke-width="1.500" fill="none" stroke-linecap="round"/></g></svg><svg x="320.5" y="0.5" width="80" height="110" viewBox="0 0 80 110"><circle cx="33" cy="88" r="7.5" fill="#3498db"/><path d="M33 88L28 97" stroke="#3498db" stroke-width="15" fill="none"/><path d="M29.2 94.8L28 97" stroke="#2a80b9" stroke-width="15" fill="none"/><rect x="-9.5" y="0" width="18" height="4.6" rx="1" fill="#b37a42" transform="translate(28 97) rotate(32)"/><circle cx="50" cy="88" r="7.5" fill="#3498db"/><path d="M50 88L59 95" stroke="#3498db" stroke-width="15" fill="none"/><path d="M57 93.5L59 95" stroke="#2a80b9" stroke-width="15" fill="none"/><rect x="-7.5" y="0" width="18" height="4.6" rx="1" fill="#b37a42" transform="translate(59 95) rotate(-32)"/><g transform="translate(0 -7)"><polygon points="20,67.5 63,67.5 58.5,93.5 24.5,93.5" fill="#2ecc71"/><rect x="24.500" y="92.500" width="34" height="3.200" fill="#b37a42"/></g><path d="M21 65L10.5 81" stroke="#fde0b2" stroke-width="13.5" stroke-linecap="round" fill="none"/><circle cx="10.5" cy="81" r="7.75" fill="#fde0b2"/><circle cx="21" cy="65" r="8.0" fill="#2ecc71"/><path d="M21 65L17 71.1" stroke="#2ecc71" stroke-width="16.0" fill="none"/><path d="M18.4 69L17 71.1" stroke="#25a55b" stroke-width="16.0" fill="none"/><path d="M65 66L72 81" stroke="#fde0b2" stroke-width="13.5" stroke-linecap="round" fill="none"/><circle cx="72" cy="81" r="7.75" fill="#fde0b2"/><circle cx="65" cy="66" r="8.0" fill="#2ecc71"/><path d="M65 66L67.7 71.7" stroke="#2ecc71" stroke-width="16.0" fill="none"/><path d="M66.6 69.4L67.7 71.7" stroke="#25a55b" stroke-width="16.0" fill="none"/><g transform="translate(1 -7)"><polygon points="31.500,66 50.500,66 48,72 34,72" fill="#e6c294"/><rect x="21" y="41.500" width="41.500" height="27" rx="3" fill="#fde0b2"/><path d="M65 14.500C65.500 25 66.500 38 64 49.500L62.500 43 42 42.500H29.500Q26 45.500 25 52V59.500H21C18.500 52 17 46 17.500 40C18.500 33 21 28.500 26 26.500C38 21.500 52 18 65 14.500Z" fill="#c48b50"/><path d="M26 26.500C21 28.500 18.500 33 17.500 40C17 46 18.500 52 21 59.500H25V52C25.500 41 29 32 37 25.500C33 25 29.500 25.300 26 26.500Z" fill="#b27b44"/><circle cx="35.3" cy="54.200" r="4.300" fill="#fff"/><ellipse cx="35.3" cy="54.400" rx="1.900" ry="2.900" fill="#7b6649"/><circle cx="53.3" cy="54.200" r="4.300" fill="#fff"/><ellipse cx="53.3" cy="54.400" rx="1.900" ry="2.900" fill="#7b6649"/><path d="M31.500 47q4-3 8-.4M49.500 46.800q4-2.600 8 .6" stroke="#c48b50" stroke-width="1.400" fill="none" stroke-linecap="round"/><path d="M39 63q.5-4.800 5-4.800t5 4.800z" fill="#8a6c4c"/><rect x="40.500" y="58.500" width="6.500" height="2.400" fill="#fff"/></g></svg><svg x="400.5" y="0.5" width="80" height="110" viewBox="0 0 80 110"><path d="M20 62L18 27" stroke="#fde0b2" stroke-width="13.5" stroke-linecap="round" fill="none"/><circle cx="18" cy="27" r="7.75" fill="#fde0b2"/><circle cx="20" cy="62" r="8.0" fill="#2ecc71"/><path d="M20 62L19.2 48.7" stroke="#2ecc71" stroke-width="16.0" fill="none"/><path d="M19.4 51.2L19.2 48.7" stroke="#25a55b" stroke-width="16.0" fill="none"/><path d="M58 62L62 50" stroke="#fde0b2" stroke-width="13.5" stroke-linecap="round" fill="none"/><circle cx="62" cy="50" r="7.75" fill="#fde0b2"/><circle cx="58" cy="62" r="8.0" fill="#2ecc71"/><path d="M58 62L59.5 57.4" stroke="#2ecc71" stroke-width="16.0" fill="none"/><path d="M58.7 59.8L59.5 57.4" stroke="#25a55b" stroke-width="16.0" fill="none"/><g transform="translate(-1 -8)"><polygon points="20,67.5 63,67.5 58.5,93.5 24.5,93.5" fill="#2ecc71"/><rect x="24.500" y="92.500" width="34" height="3.200" fill="#b37a42"/></g><circle cx="28" cy="88" r="8.5" fill="#3498db"/><path d="M28 88L27 98" stroke="#3498db" stroke-width="17" fill="none"/><path d="M27.2 95.5L27 98" stroke="#2a80b9" stroke-width="17" fill="none"/><rect x="-10.5" y="0" width="20" height="4.6" rx="1" fill="#b37a42" transform="translate(27 98) rotate(-15)"/><circle cx="54" cy="82" r="8.5" fill="#3498db"/><path d="M54 82L52.5 91" stroke="#3498db" stroke-width="17" fill="none"/><path d="M52.9 88.5L52.5 91" stroke="#2a80b9" stroke-width="17" fill="none"/><rect x="-8.5" y="0" width="20" height="4.6" rx="1" fill="#b37a42" transform="translate(52.5 91) rotate(20)"/><g transform="translate(-6.5 -6.5)"><rect x="22" y="43" width="40" height="25.500" rx="3" fill="#fde0b2"/><path d="M65 14.500C51 18 33 22 24 29C13 38 16 58 29 65.500C42 72 59 67 64 56C68 46 66 30 65 14.500Z" fill="#b27b44"/><path d="M65 14.500C53 18.500 36 23 28 30C40 28 56 30 65.500 41Z" fill="#c48b50"/></g></svg><svg x="480.5" y="0.5" width="80" height="110" viewBox="0 0 80 110"><path d="M60 62L62 27" stroke="#fde0b2" stroke-width="13.5" stroke-linecap="round" fill="none"/><circle cx="62" cy="27" r="7.75" fill="#fde0b2"/><circle cx="60" cy="62" r="8.0" fill="#2ecc71"/><path d="M60 62L60.8 48.7" stroke="#2ecc71" stroke-width="16.0" fill="none"/><path d="M60.6 51.2L60.8 48.7" stroke="#25a55b" stroke-width="16.0" fill="none"/><path d="M22 62L18 50" stroke="#fde0b2" stroke-width="13.5" stroke-linecap="round" fill="none"/><circle cx="18" cy="50" r="7.75" fill="#fde0b2"/><circle cx="22" cy="62" r="8.0" fill="#2ecc71"/><path d="M22 62L20.5 57.4" stroke="#2ecc71" stroke-width="16.0" fill="none"/><path d="M21.3 59.8L20.5 57.4" stroke="#25a55b" stroke-width="16.0" fill="none"/><g transform="translate(-1 -8)"><polygon points="20,67.5 63,67.5 58.5,93.5 24.5,93.5" fill="#2ecc71"/><rect x="24.500" y="92.500" width="34" height="3.200" fill="#b37a42"/></g><circle cx="52" cy="88" r="8.5" fill="#3498db"/><path d="M52 88L53 98" stroke="#3498db" stroke-width="17" fill="none"/><path d="M52.8 95.5L53 98" stroke="#2a80b9" stroke-width="17" fill="none"/><rect x="-8.5" y="0" width="20" height="4.6" rx="1" fill="#b37a42" transform="translate(53 98) rotate(15)"/><circle cx="26" cy="82" r="8.5" fill="#3498db"/><path d="M26 82L27.5 91" stroke="#3498db" stroke-width="17" fill="none"/><path d="M27.1 88.5L27.5 91" stroke="#2a80b9" stroke-width="17" fill="none"/><rect x="-10.5" y="0" width="20" height="4.6" rx="1" fill="#b37a42" transform="translate(27.5 91) rotate(-20)"/><g transform="translate(3 -6.5) translate(83.5 0) scale(-1 1)"><rect x="22" y="43" width="40" height="25.500" rx="3" fill="#fde0b2"/><path d="M65 14.500C51 18 33 22 24 29C13 38 16 58 29 65.500C42 72 59 67 64 56C68 46 66 30 65 14.500Z" fill="#b27b44"/><path d="M65 14.500C53 18.500 36 23 28 30C40 28 56 30 65.500 41Z" fill="#c48b50"/></g></svg><svg x="560.5" y="0.5" width="80" height="110" viewBox="0 0 80 110"><circle cx="33.5" cy="96" r="7.5" fill="#3498db"/><path d="M33.5 96L33.5 105.5" stroke="#3498db" stroke-width="15" fill="none"/><path d="M33.5 103L33.5 105.5" stroke="#2a80b9" stroke-width="15" fill="none"/><rect x="-9.5" y="0" width="18" height="4.6" rx="1" fill="#b37a42" transform="translate(33.5 105.5) rotate(0)"/><circle cx="49.5" cy="96" r="7.5" fill="#3498db"/><path d="M49.5 96L49.5 105.5" stroke="#3498db" stroke-width="15" fill="none"/><path d="M49.5 103L49.5 105.5" stroke="#2a80b9" stroke-width="15" fill="none"/><rect x="-7.5" y="0" width="18" height="4.6" rx="1" fill="#b37a42" transform="translate(49.5 105.5) rotate(0)"/><g transform="translate(0 0)"><polygon points="20,67.5 63,67.5 58.5,93.5 24.5,93.5" fill="#2ecc71"/><rect x="24.500" y="92.500" width="34" height="3.200" fill="#b37a42"/></g><path d="M20 72L9.5 46" stroke="#fde0b2" stroke-width="14" stroke-linecap="round" fill="none"/><circle cx="9.5" cy="46" r="8.0" fill="#fde0b2"/><circle cx="20" cy="72" r="8.25" fill="#2ecc71"/><path d="M20 72L16 62.1" stroke="#2ecc71" stroke-width="16.5" fill="none"/><path d="M16.9 64.4L16 62.1" stroke="#25a55b" stroke-width="16.5" fill="none"/><path d="M63 72L71.5 46" stroke="#fde0b2" stroke-width="14" stroke-linecap="round" fill="none"/><circle cx="71.5" cy="46" r="8.0" fill="#fde0b2"/><circle cx="63" cy="72" r="8.25" fill="#2ecc71"/><path d="M63 72L66.2 62.1" stroke="#2ecc71" stroke-width="16.5" fill="none"/><path d="M65.5 64.5L66.2 62.1" stroke="#25a55b" stroke-width="16.5" fill="none"/><g transform="translate(-1.5 -1)"><polygon points="31.500,66 50.500,66 48,72 34,72" fill="#e6c294"/><rect x="21" y="41.500" width="41.500" height="27" rx="3" fill="#fde0b2"/><path d="M65 14.500C65.500 25 66.500 38 64 49.500L62.500 43 42 42.500H29.500Q26 45.500 25 52V59.500H21C18.500 52 17 46 17.500 40C18.500 33 21 28.500 26 26.500C38 21.500 52 18 65 14.500Z" fill="#c48b50"/><path d="M26 26.500C21 28.500 18.500 33 17.500 40C17 46 18.500 52 21 59.500H25V52C25.500 41 29 32 37 25.500C33 25 29.500 25.300 26 26.500Z" fill="#b27b44"/><circle cx="35.3" cy="54.200" r="4.300" fill="#fff"/><ellipse cx="35.3" cy="54.400" rx="1.900" ry="2.900" fill="#7b6649"/><circle cx="53.3" cy="54.200" r="4.300" fill="#fff"/><ellipse cx="53.3" cy="54.400" rx="1.900" ry="2.900" fill="#7b6649"/><path d="M31.500 47q4-3 8-.4M49.500 46.800q4-2.600 8 .6" stroke="#c48b50" stroke-width="1.400" fill="none" stroke-linecap="round"/><path d="M38 58.500h11q-.6 5.600-5.500 5.600T38 58.500z" fill="#8a6c4c"/><rect x="40" y="58.500" width="6.500" height="2.800" fill="#fff"/></g></svg><svg x="640.5" y="0.5" width="80" height="110" viewBox="0 0 80 110"><g transform="translate(0 -2)"><polygon points="20,67.5 63,67.5 58.5,93.5 24.5,93.5" fill="#2ecc71"/><rect x="24.500" y="92.500" width="34" height="3.200" fill="#b37a42"/></g><circle cx="30" cy="93" r="8.5" fill="#3498db"/><path d="M30 93L23 100" stroke="#3498db" stroke-width="17" fill="none"/><path d="M24.8 98.2L23 100" stroke="#2a80b9" stroke-width="17" fill="none"/><rect x="-10.5" y="0" width="20" height="4.6" rx="1" fill="#b37a42" transform="translate(23 100) rotate(35)"/><circle cx="55" cy="93" r="8.5" fill="#3498db"/><path d="M55 93L63.5 100" stroke="#3498db" stroke-width="17" fill="none"/><path d="M61.6 98.4L63.5 100" stroke="#2a80b9" stroke-width="17" fill="none"/><rect x="-8.5" y="0" width="20" height="4.6" rx="1" fill="#b37a42" transform="translate(63.5 100) rotate(-35)"/><path d="M21 70L10.5 47" stroke="#fde0b2" stroke-width="14" stroke-linecap="round" fill="none"/><circle cx="10.5" cy="47" r="8.0" fill="#fde0b2"/><circle cx="21" cy="70" r="8.25" fill="#2ecc71"/><path d="M21 70L17 61.3" stroke="#2ecc71" stroke-width="16.5" fill="none"/><path d="M18 63.5L17 61.3" stroke="#25a55b" stroke-width="16.5" fill="none"/><path d="M63 70L72.5 46" stroke="#fde0b2" stroke-width="14" stroke-linecap="round" fill="none"/><circle cx="72.5" cy="46" r="8.0" fill="#fde0b2"/><circle cx="63" cy="70" r="8.25" fill="#2ecc71"/><path d="M63 70L66.6 60.9" stroke="#2ecc71" stroke-width="16.5" fill="none"/><path d="M65.7 63.2L66.6 60.9" stroke="#25a55b" stroke-width="16.5" fill="none"/><g transform="translate(-1 0)"><polygon points="31.500,66 50.500,66 48,72 34,72" fill="#e6c294"/><rect x="21" y="41.500" width="41.500" height="27" rx="3" fill="#fde0b2"/><path d="M65 14.500C65.500 25 66.500 38 64 49.500L62.500 43 42 42.500H29.500Q26 45.500 25 52V59.500H21C18.500 52 17 46 17.500 40C18.500 33 21 28.500 26 26.500C38 21.500 52 18 65 14.500Z" fill="#c48b50"/><path d="M26 26.500C21 28.500 18.500 33 17.500 40C17 46 18.500 52 21 59.500H25V52C25.500 41 29 32 37 25.500C33 25 29.500 25.300 26 26.500Z" fill="#b27b44"/><circle cx="35.3" cy="54.200" r="4.300" fill="#fff"/><ellipse cx="35.3" cy="54.400" rx="1.900" ry="2.900" fill="#7b6649"/><circle cx="53.3" cy="54.200" r="4.300" fill="#fff"/><ellipse cx="53.3" cy="54.400" rx="1.900" ry="2.900" fill="#7b6649"/><path d="M31.500 47q4-3 8-.4M49.500 46.800q4-2.600 8 .6" stroke="#c48b50" stroke-width="1.400" fill="none" stroke-linecap="round"/><path d="M38 58.500h11q-.6 5.600-5.500 5.600T38 58.500z" fill="#8a6c4c"/><rect x="40" y="58.500" width="6.500" height="2.800" fill="#fff"/></g></svg><svg x="0.5" y="110.5" width="80" height="110" viewBox="0 0 80 110"><circle cx="30" cy="93" r="7.5" fill="#3498db"/><path d="M30 93L21 99" stroke="#3498db" stroke-width="15" fill="none"/><path d="M23.1 97.6L21 99" stroke="#2a80b9" stroke-width="15" fill="none"/><rect x="-9.5" y="0" width="18" height="4.6" rx="1" fill="#b37a42" transform="translate(21 99) rotate(45)"/><circle cx="53" cy="93" r="7.5" fill="#3498db"/><path d="M53 93L63 99" stroke="#3498db" stroke-width="15" fill="none"/><path d="M60.9 97.7L63 99" stroke="#2a80b9" stroke-width="15" fill="none"/><rect x="-7.5" y="0" width="18" height="4.6" rx="1" fill="#b37a42" transform="translate(63 99) rotate(-45)"/><g transform="translate(0 -1)"><polygon points="20,67.5 63,67.5 58.5,93.5 24.5,93.5" fill="#2ecc71"/><rect x="24.500" y="92.500" width="34" height="3.200" fill="#b37a42"/></g><path d="M20 74L12.5 87" stroke="#fde0b2" stroke-width="13.5" stroke-linecap="round" fill="none"/><circle cx="12.5" cy="87" r="7.75" fill="#fde0b2"/><circle cx="20" cy="74" r="8.0" fill="#2ecc71"/><path d="M20 74L17.1 78.9" stroke="#2ecc71" stroke-width="16.0" fill="none"/><path d="M18.4 76.8L17.1 78.9" stroke="#25a55b" stroke-width="16.0" fill="none"/><path d="M63 74L69.5 86.5" stroke="#fde0b2" stroke-width="13.5" stroke-linecap="round" fill="none"/><circle cx="69.5" cy="86.5" r="7.75" fill="#fde0b2"/><circle cx="63" cy="74" r="8.0" fill="#2ecc71"/><path d="M63 74L65.5 78.8" stroke="#2ecc71" stroke-width="16.0" fill="none"/><path d="M64.3 76.5L65.5 78.8" stroke="#25a55b" stroke-width="16.0" fill="none"/><g transform="translate(0 -1)"><polygon points="31.500,66 50.500,66 48,72 34,72" fill="#e6c294"/><rect x="21" y="41.500" width="41.500" height="27" rx="3" fill="#fde0b2"/><path d="M65 14.500C65.500 25 66.500 38 64 49.500L62.500 43 42 42.500H29.500Q26 45.500 25 52V59.500H21C18.500 52 17 46 17.500 40C18.500 33 21 28.500 26 26.500C38 21.500 52 18 65 14.500Z" fill="#c48b50"/><path d="M26 26.500C21 28.500 18.500 33 17.500 40C17 46 18.500 52 21 59.500H25V52C25.500 41 29 32 37 25.500C33 25 29.500 25.300 26 26.500Z" fill="#b27b44"/><circle cx="35.3" cy="54.200" r="4.300" fill="#fff"/><ellipse cx="35.3" cy="54.400" rx="1.900" ry="2.900" fill="#7b6649"/><circle cx="53.3" cy="54.200" r="4.300" fill="#fff"/><ellipse cx="53.3" cy="54.400" rx="1.900" ry="2.900" fill="#7b6649"/><path d="M31.500 47q4-3 8-.4M49.500 46.800q4-2.600 8 .6" stroke="#c48b50" stroke-width="1.400" fill="none" stroke-linecap="round"/><path d="M38 58.500h11q-.6 5.600-5.500 5.600T38 58.500z" fill="#8a6c4c"/><rect x="40" y="58.500" width="6.500" height="2.800" fill="#fff"/></g></svg><svg x="80.5" y="110.5" width="80" height="110" viewBox="0 0 80 110"><circle cx="34" cy="95" r="7.5" fill="#3498db"/><path d="M34 95L29 102" stroke="#3498db" stroke-width="15" fill="none"/><path d="M30.5 100L29 102" stroke="#2a80b9" stroke-width="15" fill="none"/><rect x="-9.5" y="0" width="18" height="4.6" rx="1" fill="#b37a42" transform="translate(29 102) rotate(35)"/><circle cx="48" cy="96" r="8.5" fill="#3498db"/><path d="M48 96L48 105.5" stroke="#3498db" stroke-width="17" fill="none"/><path d="M48 103L48 105.5" stroke="#2a80b9" stroke-width="17" fill="none"/><rect x="-8.5" y="0" width="20" height="4.6" rx="1" fill="#b37a42" transform="translate(48 105.5) rotate(0)"/><g transform="translate(2 -4)"><polygon points="20,67.5 63,67.5 58.5,93.5 24.5,93.5" fill="#2ecc71"/><rect x="24.500" y="92.500" width="34" height="3.200" fill="#b37a42"/></g><path d="M60 74L61 92" stroke="#fde0b2" stroke-width="11" stroke-linecap="round" fill="none"/><circle cx="61" cy="92" r="6.5" fill="#fde0b2"/><circle cx="60" cy="74" r="6.75" fill="#2ecc71"/><path d="M60 74L60.4 80.8" stroke="#2ecc71" stroke-width="13.5" fill="none"/><path d="M60.2 78.3L60.4 80.8" stroke="#25a55b" stroke-width="13.5" fill="none"/><path d="M23 72L21.5 90" stroke="#fde0b2" stroke-width="13.5" stroke-linecap="round" fill="none"/><circle cx="21.5" cy="90" r="7.75" fill="#fde0b2"/><circle cx="23" cy="72" r="8.0" fill="#2ecc71"/><path d="M23 72L22.4 78.8" stroke="#2ecc71" stroke-width="16.0" fill="none"/><path d="M22.6 76.3L22.4 78.8" stroke="#25a55b" stroke-width="16.0" fill="none"/><g transform="translate(2 -1)"><polygon points="31.500,66 50.500,66 48,72 34,72" fill="#e6c294"/><rect x="21" y="41.500" width="41.500" height="27" rx="3" fill="#fde0b2"/><path d="M65 14.500C65.500 25 66.500 38 64 49.500L62.500 43 42 42.500H29.500Q26 45.500 25 52V59.500H21C18.500 52 17 46 17.500 40C18.500 33 21 28.500 26 26.500C38 21.500 52 18 65 14.500Z" fill="#c48b50"/><path d="M26 26.500C21 28.500 18.500 33 17.500 40C17 46 18.500 52 21 59.500H25V52C25.500 41 29 32 37 25.500C33 25 29.500 25.300 26 26.500Z" fill="#b27b44"/><circle cx="35.3" cy="54.200" r="4.300" fill="#fff"/><ellipse cx="35.3" cy="54.400" rx="1.900" ry="2.900" fill="#7b6649"/><circle cx="53.3" cy="54.200" r="4.300" fill="#fff"/><ellipse cx="53.3" cy="54.400" rx="1.900" ry="2.900" fill="#7b6649"/><path d="M31.500 47q4-3 8-.4M49.500 46.800q4-2.600 8 .6" stroke="#c48b50" stroke-width="1.400" fill="none" stroke-linecap="round"/><path d="M38 58.500h11q-.6 5.600-5.500 5.600T38 58.500z" fill="#8a6c4c"/><rect x="40" y="58.500" width="6.500" height="2.800" fill="#fff"/></g></svg><svg x="160.5" y="110.5" width="80" height="110" viewBox="0 0 80 110"><circle cx="24.5" cy="96" r="7.5" fill="#3498db"/><path d="M24.5 96L24.5 105.5" stroke="#3498db" stroke-width="15" fill="none"/><path d="M24.5 103L24.5 105.5" stroke="#2a80b9" stroke-width="15" fill="none"/><rect x="-9.5" y="0" width="18" height="4.6" rx="1" fill="#b37a42" transform="translate(24.5 105.5) rotate(0)"/><circle cx="40.5" cy="96" r="7.5" fill="#3498db"/><path d="M40.5 96L40.5 105.5" stroke="#3498db" stroke-width="15" fill="none"/><path d="M40.5 103L40.5 105.5" stroke="#2a80b9" stroke-width="15" fill="none"/><rect x="-7.5" y="0" width="18" height="4.6" rx="1" fill="#b37a42" transform="translate(40.5 105.5) rotate(0)"/><g transform="translate(-12 -1)"><polygon points="20,67.5 63,67.5 58.5,93.5 24.5,93.5" fill="#2ecc71"/><rect x="24.500" y="92.500" width="34" height="3.200" fill="#b37a42"/></g><path d="M9.5 76L11 94" stroke="#fde0b2" stroke-width="13.5" stroke-linecap="round" fill="none"/><circle cx="11" cy="94" r="7.75" fill="#fde0b2"/><circle cx="9.5" cy="76" r="8.0" fill="#2ecc71"/><path d="M9.5 76L10.1 82.8" stroke="#2ecc71" stroke-width="16.0" fill="none"/><path d="M9.9 80.3L10.1 82.8" stroke="#25a55b" stroke-width="16.0" fill="none"/><path d="M50 71L72 70" stroke="#fde0b2" stroke-width="13.5" stroke-linecap="round" fill="none"/><circle cx="72" cy="70" r="7.75" fill="#fde0b2"/><circle cx="50" cy="71" r="8.0" fill="#2ecc71"/><path d="M50 71L58.4 70.6" stroke="#2ecc71" stroke-width="16.0" fill="none"/><path d="M55.9 70.7L58.4 70.6" stroke="#25a55b" stroke-width="16.0" fill="none"/><g transform="translate(-11 0)"><polygon points="31.500,66 50.500,66 48,72 34,72" fill="#e6c294"/><rect x="21" y="41.500" width="41.500" height="27" rx="3" fill="#fde0b2"/><path d="M65 14.500C65.500 25 66.500 38 64 49.500L62.500 43 42 42.500H29.500Q26 45.500 25 52V59.500H21C18.500 52 17 46 17.500 40C18.500 33 21 28.500 26 26.500C38 21.500 52 18 65 14.500Z" fill="#c48b50"/><path d="M26 26.500C21 28.500 18.500 33 17.500 40C17 46 18.500 52 21 59.500H25V52C25.500 41 29 32 37 25.500C33 25 29.500 25.300 26 26.500Z" fill="#b27b44"/><circle cx="35.3" cy="54.200" r="4.300" fill="#fff"/><ellipse cx="35.3" cy="54.400" rx="1.900" ry="2.900" fill="#7b6649"/><circle cx="53.3" cy="54.200" r="4.300" fill="#fff"/><ellipse cx="53.3" cy="54.400" rx="1.900" ry="2.900" fill="#7b6649"/><path d="M31.500 48.500q4-4 8.500-1.500M49 47.500q4.500-2.800 8.500 0" stroke="#c48b50" stroke-width="1.500" fill="none" stroke-linecap="round"/><path d="M38.500 60.500q5.500 3.800 11 0" stroke="#8a6c4c" stroke-width="1.500" fill="none" stroke-linecap="round"/></g></svg><svg x="240.5" y="110.5" width="80" height="110" viewBox="0 0 80 110"><circle cx="25.5" cy="96" r="7.5" fill="#3498db"/><path d="M25.5 96L25.5 105.5" stroke="#3498db" stroke-width="15" fill="none"/><path d="M25.5 103L25.5 105.5" stroke="#2a80b9" stroke-width="15" fill="none"/><rect x="-9.5" y="0" width="18" height="4.6" rx="1" fill="#b37a42" transform="translate(25.5 105.5) rotate(0)"/><circle cx="41.5" cy="96" r="7.5" fill="#3498db"/><path d="M41.5 96L41.5 105.5" stroke="#3498db" stroke-width="15" fill="none"/><path d="M41.5 103L41.5 105.5" stroke="#2a80b9" stroke-width="15" fill="none"/><rect x="-7.5" y="0" width="18" height="4.6" rx="1" fill="#b37a42" transform="translate(41.5 105.5) rotate(0)"/><g transform="translate(-7 -1)"><polygon points="20,67.5 63,67.5 58.5,93.5 24.5,93.5" fill="#2ecc71"/><rect x="24.500" y="92.500" width="34" height="3.200" fill="#b37a42"/></g><path d="M53 76L42 88" stroke="#fde0b2" stroke-width="13.5" stroke-linecap="round" fill="none"/><circle cx="42" cy="88" r="7.75" fill="#fde0b2"/><circle cx="53" cy="76" r="8.0" fill="#2ecc71"/><path d="M53 76L48.8 80.6" stroke="#2ecc71" stroke-width="16.0" fill="none"/><path d="M50.5 78.7L48.8 80.6" stroke="#25a55b" stroke-width="16.0" fill="none"/><path d="M17 76L34 88" stroke="#fde0b2" stroke-width="13.5" stroke-linecap="round" fill="none"/><circle cx="34" cy="88" r="7.75" fill="#fde0b2"/><circle cx="17" cy="76" r="8.0" fill="#2ecc71"/><path d="M17 76L23.5 80.6" stroke="#2ecc71" stroke-width="16.0" fill="none"/><path d="M21.4 79.1L23.5 80.6" stroke="#25a55b" stroke-width="16.0" fill="none"/><g transform="translate(-8 0)"><polygon points="31.500,66 50.500,66 48,72 34,72" fill="#e6c294"/><rect x="21" y="41.500" width="41.500" height="27" rx="3" fill="#fde0b2"/><path d="M65 14.500C65.500 25 66.500 38 64 49.500L62.500 43 42 42.500H29.500Q26 45.500 25 52V59.500H21C18.500 52 17 46 17.500 40C18.500 33 21 28.500 26 26.500C38 21.500 52 18 65 14.500Z" fill="#c48b50"/><path d="M26 26.500C21 28.500 18.500 33 17.500 40C17 46 18.500 52 21 59.500H25V52C25.500 41 29 32 37 25.500C33 25 29.500 25.300 26 26.500Z" fill="#b27b44"/><circle cx="35.3" cy="54.200" r="4.300" fill="#fff"/><ellipse cx="35.3" cy="54.400" rx="1.900" ry="2.900" fill="#7b6649"/><circle cx="53.3" cy="54.200" r="4.300" fill="#fff"/><ellipse cx="53.3" cy="54.400" rx="1.900" ry="2.900" fill="#7b6649"/><path d="M31.500 48.500q4-4 8.500-1.500M49 47.500q4.500-2.800 8.500 0" stroke="#c48b50" stroke-width="1.500" fill="none" stroke-linecap="round"/><path d="M38.500 60.500q5.500 3.800 11 0" stroke="#8a6c4c" stroke-width="1.500" fill="none" stroke-linecap="round"/></g></svg><svg x="320.5" y="110.5" width="80" height="110" viewBox="0 0 80 110"><circle cx="32" cy="94" r="7.5" fill="#3498db"/><path d="M32 94L30 105.5" stroke="#3498db" stroke-width="15" fill="none"/><path d="M30.4 103L30 105.5" stroke="#2a80b9" stroke-width="15" fill="none"/><rect x="-9.5" y="0" width="18" height="4.6" rx="1" fill="#b37a42" transform="translate(30 105.5) rotate(0)"/><circle cx="42" cy="91" r="6.5" fill="#3498db"/><path d="M42 91L55 97" stroke="#3498db" stroke-width="13" fill="none"/><path d="M52.7 96L55 97" stroke="#2a80b9" stroke-width="13" fill="none"/><rect x="-6.5" y="0" width="16" height="4.6" rx="1" fill="#b37a42" transform="translate(55 97) rotate(-50)"/><g transform="translate(-13 -3)"><polygon points="20,67.5 63,67.5 58.5,93.5 24.5,93.5" fill="#2ecc71"/><rect x="24.500" y="92.500" width="34" height="3.200" fill="#b37a42"/></g><path d="M9 72L11 92" stroke="#fde0b2" stroke-width="13.5" stroke-linecap="round" fill="none"/><circle cx="11" cy="92" r="7.75" fill="#fde0b2"/><circle cx="9" cy="72" r="8.0" fill="#2ecc71"/><path d="M9 72L9.8 79.6" stroke="#2ecc71" stroke-width="16.0" fill="none"/><path d="M9.5 77.1L9.8 79.6" stroke="#25a55b" stroke-width="16.0" fill="none"/><path d="M50 68L62 42" stroke="#fde0b2" stroke-width="13.5" stroke-linecap="round" fill="none"/><circle cx="62" cy="42" r="7.75" fill="#fde0b2"/><circle cx="50" cy="68" r="8.0" fill="#2ecc71"/><path d="M50 68L54.6 58.1" stroke="#2ecc71" stroke-width="16.0" fill="none"/><path d="M53.5 60.4L54.6 58.1" stroke="#25a55b" stroke-width="16.0" fill="none"/><g transform="translate(-12 -3)"><polygon points="31.500,66 50.500,66 48,72 34,72" fill="#e6c294"/><rect x="21" y="41.500" width="41.500" height="27" rx="3" fill="#fde0b2"/><path d="M65 14.500C65.500 25 66.500 38 64 49.500L62.500 43 42 42.500H29.500Q26 45.500 25 52V59.500H21C18.500 52 17 46 17.500 40C18.500 33 21 28.500 26 26.500C38 21.500 52 18 65 14.500Z" fill="#c48b50"/><path d="M26 26.500C21 28.500 18.500 33 17.500 40C17 46 18.500 52 21 59.500H25V52C25.500 41 29 32 37 25.500C33 25 29.500 25.300 26 26.500Z" fill="#b27b44"/><circle cx="35.3" cy="54.200" r="4.300" fill="#fff"/><ellipse cx="35.3" cy="54.400" rx="1.900" ry="2.900" fill="#7b6649"/><circle cx="53.3" cy="54.200" r="4.300" fill="#fff"/><ellipse cx="53.3" cy="54.400" rx="1.900" ry="2.900" fill="#7b6649"/><path d="M31.500 47q4-3 8-.4M49.500 46.800q4-2.600 8 .6" stroke="#c48b50" stroke-width="1.400" fill="none" stroke-linecap="round"/><path d="M38 58.500h11q-.6 5.600-5.500 5.600T38 58.500z" fill="#8a6c4c"/><rect x="40" y="58.500" width="6.500" height="2.800" fill="#fff"/></g></svg><svg x="400.5" y="110.5" width="80" height="110" viewBox="0 0 80 110"><circle cx="22" cy="96" r="7.5" fill="#3498db"/><path d="M22 96L16 103" stroke="#3498db" stroke-width="15" fill="none"/><path d="M17.6 101.1L16 103" stroke="#2a80b9" stroke-width="15" fill="none"/><rect x="-9.5" y="0" width="18" height="4.6" rx="1" fill="#b37a42" transform="translate(16 103) rotate(30)"/><circle cx="40" cy="97" r="8.5" fill="#3498db"/><path d="M40 97L40 105.5" stroke="#3498db" stroke-width="17" fill="none"/><path d="M40 103L40 105.5" stroke="#2a80b9" stroke-width="17" fill="none"/><rect x="-8.5" y="0" width="20" height="4.6" rx="1" fill="#b37a42" transform="translate(40 105.5) rotate(0)"/><g transform="translate(-13 0) rotate(-6 41 82)"><polygon points="20,67.5 63,67.5 58.5,93.5 24.5,93.5" fill="#2ecc71"/><rect x="24.500" y="92.500" width="34" height="3.200" fill="#b37a42"/></g><path d="M9 78L9 93" stroke="#fde0b2" stroke-width="13.5" stroke-linecap="round" fill="none"/><circle cx="9" cy="93" r="7.75" fill="#fde0b2"/><circle cx="9" cy="78" r="8.0" fill="#2ecc71"/><path d="M9 78L9 83.7" stroke="#2ecc71" stroke-width="16.0" fill="none"/><path d="M9 81.2L9 83.7" stroke="#25a55b" stroke-width="16.0" fill="none"/><path d="M50 72L72.5 74" stroke="#fde0b2" stroke-width="13.5" stroke-linecap="round" fill="none"/><circle cx="72.5" cy="74" r="7.75" fill="#fde0b2"/><circle cx="50" cy="72" r="8.0" fill="#2ecc71"/><path d="M50 72L58.5 72.8" stroke="#2ecc71" stroke-width="16.0" fill="none"/><path d="M56.1 72.5L58.5 72.8" stroke="#25a55b" stroke-width="16.0" fill="none"/><g transform="translate(-6 1) rotate(6 42 56)"><polygon points="31.500,66 50.500,66 48,72 34,72" fill="#e6c294"/><rect x="21" y="41.500" width="41.500" height="27" rx="3" fill="#fde0b2"/><path d="M65 14.500C65.500 25 66.500 38 64 49.500L62.500 43 42 42.500H29.500Q26 45.500 25 52V59.500H21C18.500 52 17 46 17.500 40C18.500 33 21 28.500 26 26.500C38 21.500 52 18 65 14.500Z" fill="#c48b50"/><path d="M26 26.500C21 28.500 18.500 33 17.500 40C17 46 18.500 52 21 59.500H25V52C25.500 41 29 32 37 25.500C33 25 29.500 25.300 26 26.500Z" fill="#b27b44"/><circle cx="35.3" cy="54.200" r="4.300" fill="#fff"/><ellipse cx="35.3" cy="54.400" rx="1.900" ry="2.900" fill="#7b6649"/><circle cx="53.3" cy="54.200" r="4.300" fill="#fff"/><ellipse cx="53.3" cy="54.400" rx="1.900" ry="2.900" fill="#7b6649"/><path d="M31.500 48.500q4-4 8.500-1.500M49 47.500q4.500-2.800 8.500 0" stroke="#c48b50" stroke-width="1.500" fill="none" stroke-linecap="round"/><path d="M38.500 60.500q5.500 3.800 11 0" stroke="#8a6c4c" stroke-width="1.500" fill="none" stroke-linecap="round"/></g></svg><svg x="480.5" y="110.5" width="80" height="110" viewBox="0 0 80 110"><circle cx="28" cy="96" r="8.0" fill="#3498db"/><path d="M28 96L28 105.5" stroke="#3498db" stroke-width="16" fill="none"/><path d="M28 103L28 105.5" stroke="#2a80b9" stroke-width="16" fill="none"/><rect x="-10" y="0" width="19" height="4.6" rx="1" fill="#b37a42" transform="translate(28 105.5) rotate(0)"/><circle cx="50" cy="90" r="7.5" fill="#3498db"/><path d="M50 90L65 90" stroke="#3498db" stroke-width="15" fill="none"/><path d="M62.5 90L65 90" stroke="#2a80b9" stroke-width="15" fill="none"/><rect x="-7.5" y="0" width="18" height="4.6" rx="1" fill="#b37a42" transform="translate(65 90) rotate(-60)"/><g transform="translate(-8 -3) rotate(-6 41 82)"><polygon points="20,67.5 63,67.5 58.5,93.5 24.5,93.5" fill="#2ecc71"/><rect x="24.500" y="92.500" width="34" height="3.200" fill="#b37a42"/></g><path d="M14 78L11.5 92" stroke="#fde0b2" stroke-width="13.5" stroke-linecap="round" fill="none"/><circle cx="11.5" cy="92" r="7.75" fill="#fde0b2"/><circle cx="14" cy="78" r="8.0" fill="#2ecc71"/><path d="M14 78L13.1 83.3" stroke="#2ecc71" stroke-width="16.0" fill="none"/><path d="M13.5 80.9L13.1 83.3" stroke="#25a55b" stroke-width="16.0" fill="none"/><g transform="translate(-7.5 -4.5)"><polygon points="31.500,66 50.500,66 48,72 34,72" fill="#e6c294"/><rect x="21" y="41.500" width="41.500" height="27" rx="3" fill="#fde0b2"/><path d="M65 14.500C65.500 25 66.500 38 64 49.500L62.500 43 42 42.500H29.500Q26 45.500 25 52V59.500H21C18.500 52 17 46 17.500 40C18.500 33 21 28.500 26 26.500C38 21.500 52 18 65 14.500Z" fill="#c48b50"/><path d="M26 26.500C21 28.500 18.500 33 17.500 40C17 46 18.500 52 21 59.500H25V52C25.500 41 29 32 37 25.500C33 25 29.500 25.300 26 26.500Z" fill="#b27b44"/><circle cx="35.3" cy="54.200" r="4.300" fill="#fff"/><ellipse cx="35.3" cy="54.400" rx="1.900" ry="2.900" fill="#7b6649"/><circle cx="53.3" cy="54.200" r="4.300" fill="#fff"/><ellipse cx="53.3" cy="54.400" rx="1.900" ry="2.900" fill="#7b6649"/><path d="M31.500 48.500q4-4 8.500-1.500M49 47.500q4.500-2.800 8.500 0" stroke="#c48b50" stroke-width="1.500" fill="none" stroke-linecap="round"/><path d="M38.500 60.500q5.500 3.800 11 0" stroke="#8a6c4c" stroke-width="1.500" fill="none" stroke-linecap="round"/></g></svg><svg x="560.5" y="110.5" width="80" height="110" viewBox="0 0 80 110"><circle cx="31" cy="91" r="7.5" fill="#3498db"/><path d="M31 91L28 99" stroke="#3498db" stroke-width="15" fill="none"/><path d="M28.9 96.7L28 99" stroke="#2a80b9" stroke-width="15" fill="none"/><rect x="-9.5" y="0" width="18" height="4.6" rx="1" fill="#b37a42" transform="translate(28 99) rotate(20)"/><circle cx="50" cy="91" r="7.5" fill="#3498db"/><path d="M50 91L54 99" stroke="#3498db" stroke-width="15" fill="none"/><path d="M52.9 96.8L54 99" stroke="#2a80b9" stroke-width="15" fill="none"/><rect x="-7.5" y="0" width="18" height="4.6" rx="1" fill="#b37a42" transform="translate(54 99) rotate(-8)"/><g transform="translate(-1 -8)"><polygon points="20,67.5 63,67.5 58.5,93.5 24.5,93.5" fill="#2ecc71"/><rect x="24.500" y="92.500" width="34" height="3.200" fill="#b37a42"/></g><path d="M20 66L9 78" stroke="#fde0b2" stroke-width="13.5" stroke-linecap="round" fill="none"/><circle cx="9" cy="78" r="7.75" fill="#fde0b2"/><circle cx="20" cy="66" r="8.0" fill="#2ecc71"/><path d="M20 66L15.8 70.6" stroke="#2ecc71" stroke-width="16.0" fill="none"/><path d="M17.5 68.7L15.8 70.6" stroke="#25a55b" stroke-width="16.0" fill="none"/><path d="M62 67L72.5 76" stroke="#fde0b2" stroke-width="13.5" stroke-linecap="round" fill="none"/><circle cx="72.5" cy="76" r="7.75" fill="#fde0b2"/><circle cx="62" cy="67" r="8.0" fill="#2ecc71"/><path d="M62 67L66 70.4" stroke="#2ecc71" stroke-width="16.0" fill="none"/><path d="M64.1 68.8L66 70.4" stroke="#25a55b" stroke-width="16.0" fill="none"/><g transform="translate(-2 -8)"><polygon points="31.500,66 50.500,66 48,72 34,72" fill="#e6c294"/><rect x="21" y="41.500" width="41.500" height="27" rx="3" fill="#fde0b2"/><path d="M65 14.500C65.500 25 66.500 38 64 49.500L62.500 43 42 42.500H29.500Q26 45.500 25 52V59.500H21C18.500 52 17 46 17.500 40C18.500 33 21 28.500 26 26.500C38 21.500 52 18 65 14.500Z" fill="#c48b50"/><path d="M26 26.500C21 28.500 18.500 33 17.500 40C17 46 18.500 52 21 59.500H25V52C25.500 41 29 32 37 25.500C33 25 29.500 25.300 26 26.500Z" fill="#b27b44"/><circle cx="35.3" cy="54.200" r="4.300" fill="#fff"/><ellipse cx="35.3" cy="54.400" rx="1.900" ry="2.900" fill="#7b6649"/><circle cx="53.3" cy="54.200" r="4.300" fill="#fff"/><ellipse cx="53.3" cy="54.400" rx="1.900" ry="2.900" fill="#7b6649"/><path d="M31.500 48.500q4-4 8.500-1.500M49 47.500q4.500-2.800 8.500 0" stroke="#c48b50" stroke-width="1.500" fill="none" stroke-linecap="round"/><path d="M38.500 60.500q5.500 3.800 11 0" stroke="#8a6c4c" stroke-width="1.500" fill="none" stroke-linecap="round"/></g></svg><svg x="640.5" y="110.5" width="80" height="110" viewBox="0 0 80 110"><circle cx="32" cy="91" r="7.5" fill="#3498db"/><path d="M32 91L30 101" stroke="#3498db" stroke-width="15" fill="none"/><path d="M30.5 98.5L30 101" stroke="#2a80b9" stroke-width="15" fill="none"/><rect x="-9.5" y="0" width="18" height="4.6" rx="1" fill="#b37a42" transform="translate(30 101) rotate(15)"/><circle cx="50" cy="90" r="7.5" fill="#3498db"/><path d="M50 90L53 96" stroke="#3498db" stroke-width="15" fill="none"/><path d="M51.9 93.8L53 96" stroke="#2a80b9" stroke-width="15" fill="none"/><rect x="-7.5" y="0" width="18" height="4.6" rx="1" fill="#b37a42" transform="translate(53 96) rotate(0)"/><g transform="translate(-1 -8.5)"><polygon points="20,67.5 63,67.5 58.5,93.5 24.5,93.5" fill="#2ecc71"/><rect x="24.500" y="92.500" width="34" height="3.200" fill="#b37a42"/></g><path d="M20 66L10.5 79" stroke="#fde0b2" stroke-width="13.5" stroke-linecap="round" fill="none"/><circle cx="10.5" cy="79" r="7.75" fill="#fde0b2"/><circle cx="20" cy="66" r="8.0" fill="#2ecc71"/><path d="M20 66L16.4 70.9" stroke="#2ecc71" stroke-width="16.0" fill="none"/><path d="M17.9 68.9L16.4 70.9" stroke="#25a55b" stroke-width="16.0" fill="none"/><path d="M62 67L72.5 77" stroke="#fde0b2" stroke-width="13.5" stroke-linecap="round" fill="none"/><circle cx="72.5" cy="77" r="7.75" fill="#fde0b2"/><circle cx="62" cy="67" r="8.0" fill="#2ecc71"/><path d="M62 67L66 70.8" stroke="#2ecc71" stroke-width="16.0" fill="none"/><path d="M64.2 69.1L66 70.8" stroke="#25a55b" stroke-width="16.0" fill="none"/><g transform="translate(-2 -9)"><polygon points="31.500,66 50.500,66 48,72 34,72" fill="#e6c294"/><rect x="21" y="41.500" width="41.500" height="27" rx="3" fill="#fde0b2"/><path d="M65 14.500C65.500 25 66.500 38 64 49.500L62.500 43 42 42.500H29.500Q26 45.500 25 52V59.500H21C18.500 52 17 46 17.500 40C18.500 33 21 28.500 26 26.500C38 21.500 52 18 65 14.500Z" fill="#c48b50"/><path d="M26 26.500C21 28.500 18.500 33 17.500 40C17 46 18.500 52 21 59.500H25V52C25.500 41 29 32 37 25.500C33 25 29.500 25.300 26 26.500Z" fill="#b27b44"/><circle cx="35.3" cy="54.200" r="4.300" fill="#fff"/><ellipse cx="35.3" cy="54.400" rx="1.900" ry="2.900" fill="#7b6649"/><circle cx="53.3" cy="54.200" r="4.300" fill="#fff"/><ellipse cx="53.3" cy="54.400" rx="1.900" ry="2.900" fill="#7b6649"/><path d="M31.500 48.500q4-4 8.500-1.500M49 47.500q4.500-2.800 8.500 0" stroke="#c48b50" stroke-width="1.500" fill="none" stroke-linecap="round"/><path d="M38.500 60.500q5.500 3.800 11 0" stroke="#8a6c4c" stroke-width="1.500" fill="none" stroke-linecap="round"/></g></svg><svg x="0.5" y="220.5" width="80" height="110" viewBox="0 0 80 110"><circle cx="24.5" cy="96" r="7.5" fill="#3498db"/><path d="M24.5 96L24.5 105.5" stroke="#3498db" stroke-width="15" fill="none"/><path d="M24.5 103L24.5 105.5" stroke="#2a80b9" stroke-width="15" fill="none"/><rect x="-9.5" y="0" width="18" height="4.6" rx="1" fill="#b37a42" transform="translate(24.5 105.5) rotate(0)"/><circle cx="40.5" cy="96" r="7.5" fill="#3498db"/><path d="M40.5 96L40.5 105.5" stroke="#3498db" stroke-width="15" fill="none"/><path d="M40.5 103L40.5 105.5" stroke="#2a80b9" stroke-width="15" fill="none"/><rect x="-7.5" y="0" width="18" height="4.6" rx="1" fill="#b37a42" transform="translate(40.5 105.5) rotate(0)"/><g transform="translate(-11 -1)"><polygon points="20,67.5 63,67.5 58.5,93.5 24.5,93.5" fill="#2ecc71"/><rect x="24.500" y="92.500" width="34" height="3.200" fill="#b37a42"/></g><path d="M9.5 76L10.5 95" stroke="#fde0b2" stroke-width="13.5" stroke-linecap="round" fill="none"/><circle cx="10.5" cy="95" r="7.75" fill="#fde0b2"/><circle cx="9.5" cy="76" r="8.0" fill="#2ecc71"/><path d="M9.5 76L9.9 83.2" stroke="#2ecc71" stroke-width="16.0" fill="none"/><path d="M9.7 80.7L9.9 83.2" stroke="#25a55b" stroke-width="16.0" fill="none"/><path d="M51 74L67 84" stroke="#fde0b2" stroke-width="13.5" stroke-linecap="round" fill="none"/><circle cx="67" cy="84" r="7.75" fill="#fde0b2"/><circle cx="51" cy="74" r="8.0" fill="#2ecc71"/><path d="M51 74L57.1 77.8" stroke="#2ecc71" stroke-width="16.0" fill="none"/><path d="M55 76.5L57.1 77.8" stroke="#25a55b" stroke-width="16.0" fill="none"/><g transform="translate(-10 0)"><polygon points="31.500,66 50.500,66 48,72 34,72" fill="#e6c294"/><rect x="21" y="41.500" width="41.500" height="27" rx="3" fill="#fde0b2"/><path d="M65 14.500C65.500 25 66.500 38 64 49.500L62.500 43 42 42.500H29.500Q26 45.500 25 52V59.500H21C18.500 52 17 46 17.500 40C18.500 33 21 28.500 26 26.500C38 21.500 52 18 65 14.500Z" fill="#c48b50"/><path d="M26 26.500C21 28.500 18.500 33 17.500 40C17 46 18.500 52 21 59.500H25V52C25.500 41 29 32 37 25.500C33 25 29.500 25.300 26 26.500Z" fill="#b27b44"/><circle cx="35.3" cy="54.200" r="4.300" fill="#fff"/><ellipse cx="35.3" cy="54.400" rx="1.900" ry="2.900" fill="#7b6649"/><circle cx="53.3" cy="54.200" r="4.300" fill="#fff"/><ellipse cx="53.3" cy="54.400" rx="1.900" ry="2.900" fill="#7b6649"/><path d="M31.500 47q4-3 8-.4M49.500 46.800q4-2.600 8 .6" stroke="#c48b50" stroke-width="1.400" fill="none" stroke-linecap="round"/><path d="M38 58.500h11q-.6 5.600-5.500 5.600T38 58.500z" fill="#8a6c4c"/><rect x="40" y="58.500" width="6.500" height="2.800" fill="#fff"/></g></svg><svg x="80.5" y="220.5" width="80" height="110" viewBox="0 0 80 110"><circle cx="40" cy="92" r="6.0" fill="#3498db"/><path d="M40 92L34 102" stroke="#3498db" stroke-width="12" fill="none"/><path d="M35.3 99.9L34 102" stroke="#2a80b9" stroke-width="12" fill="none"/><rect x="-8" y="0" width="15" height="4.6" rx="1" fill="#b37a42" transform="translate(34 102) rotate(60)"/><circle cx="54" cy="82" r="7.0" fill="#3498db"/><path d="M54 82L66 86" stroke="#3498db" stroke-width="14" fill="none"/><path d="M63.6 85.2L66 86" stroke="#2a80b9" stroke-width="14" fill="none"/><rect x="-7" y="0" width="17" height="4.6" rx="1" fill="#b37a42" transform="translate(66 86) rotate(-45)"/><g transform="translate(-3 -2) rotate(-28 41 82)"><polygon points="20,67.5 63,67.5 58.5,93.5 24.5,93.5" fill="#2ecc71"/><rect x="24.500" y="92.500" width="34" height="3.200" fill="#b37a42"/></g><path d="M22 84L13 97" stroke="#fde0b2" stroke-width="13.5" stroke-linecap="round" fill="none"/><circle cx="13" cy="97" r="7.75" fill="#fde0b2"/><circle cx="22" cy="84" r="8.0" fill="#2ecc71"/><path d="M22 84L18.6 88.9" stroke="#2ecc71" stroke-width="16.0" fill="none"/><path d="M20 86.9L18.6 88.9" stroke="#25a55b" stroke-width="16.0" fill="none"/><path d="M52 62L69 61" stroke="#fde0b2" stroke-width="13.5" stroke-linecap="round" fill="none"/><circle cx="69" cy="61" r="7.75" fill="#fde0b2"/><circle cx="52" cy="62" r="8.0" fill="#2ecc71"/><path d="M52 62L58.5 61.6" stroke="#2ecc71" stroke-width="16.0" fill="none"/><path d="M56 61.8L58.5 61.6" stroke="#25a55b" stroke-width="16.0" fill="none"/><g transform="translate(-10 7.5) rotate(-8 42 56)"><polygon points="31.500,66 50.500,66 48,72 34,72" fill="#e6c294"/><rect x="21" y="41.500" width="41.500" height="27" rx="3" fill="#fde0b2"/><path d="M65 14.500C65.500 25 66.500 38 64 49.500L62.500 43 42 42.500H29.500Q26 45.500 25 52V59.500H21C18.500 52 17 46 17.500 40C18.500 33 21 28.500 26 26.500C38 21.500 52 18 65 14.500Z" fill="#c48b50"/><path d="M26 26.500C21 28.500 18.500 33 17.500 40C17 46 18.500 52 21 59.500H25V52C25.500 41 29 32 37 25.500C33 25 29.500 25.300 26 26.500Z" fill="#b27b44"/><circle cx="35.3" cy="54.200" r="4.300" fill="#fff"/><ellipse cx="35.3" cy="54.400" rx="1.900" ry="2.900" fill="#7b6649"/><circle cx="53.3" cy="54.200" r="4.300" fill="#fff"/><ellipse cx="53.3" cy="54.400" rx="1.900" ry="2.900" fill="#7b6649"/><path d="M31.500 48.500q4-4 8.500-1.500M49 47.500q4.500-2.800 8.500 0" stroke="#c48b50" stroke-width="1.500" fill="none" stroke-linecap="round"/><path d="M38.500 60.500q5.500 3.800 11 0" stroke="#8a6c4c" stroke-width="1.500" fill="none" stroke-linecap="round"/></g></svg><svg x="160.5" y="220.5" width="80" height="110" viewBox="0 0 80 110"><circle cx="38" cy="86" r="7.5" fill="#3498db"/><path d="M38 86L33 97" stroke="#3498db" stroke-width="15" fill="none"/><path d="M34 94.7L33 97" stroke="#2a80b9" stroke-width="15" fill="none"/><rect x="-9.5" y="0" width="18" height="4.6" rx="1" fill="#b37a42" transform="translate(33 97) rotate(30)"/><g transform="translate(3 -10)"><polygon points="20,67.5 63,67.5 58.5,93.5 24.5,93.5" fill="#2ecc71"/><rect x="24.500" y="92.500" width="34" height="3.200" fill="#b37a42"/></g><circle cx="60" cy="82" r="8.5" fill="#3498db"/><path d="M60 82L59 92" stroke="#3498db" stroke-width="17" fill="none"/><path d="M59.2 89.5L59 92" stroke="#2a80b9" stroke-width="17" fill="none"/><rect x="-8.5" y="0" width="20" height="4.6" rx="1" fill="#b37a42" transform="translate(59 92) rotate(12)"/><path d="M24 62L13 82" stroke="#fde0b2" stroke-width="13.5" stroke-linecap="round" fill="none"/><circle cx="13" cy="82" r="7.75" fill="#fde0b2"/><circle cx="24" cy="62" r="8.0" fill="#2ecc71"/><path d="M24 62L19.8 69.6" stroke="#2ecc71" stroke-width="16.0" fill="none"/><path d="M21 67.4L19.8 69.6" stroke="#25a55b" stroke-width="16.0" fill="none"/><path d="M66 54L72.5 34" stroke="#fde0b2" stroke-width="13.5" stroke-linecap="round" fill="none"/><circle cx="72.5" cy="34" r="7.75" fill="#fde0b2"/><circle cx="66" cy="54" r="8.0" fill="#2ecc71"/><path d="M66 54L68.5 46.4" stroke="#2ecc71" stroke-width="16.0" fill="none"/><path d="M67.7 48.8L68.5 46.4" stroke="#25a55b" stroke-width="16.0" fill="none"/><g transform="translate(2 -10.5)"><polygon points="31.500,66 50.500,66 48,72 34,72" fill="#e6c294"/><rect x="21" y="41.500" width="41.500" height="27" rx="3" fill="#fde0b2"/><path d="M65 14.500C65.500 25 66.500 38 64 49.500L62.500 43 42 42.500H29.500Q26 45.500 25 52V59.500H21C18.500 52 17 46 17.500 40C18.500 33 21 28.500 26 26.500C38 21.500 52 18 65 14.500Z" fill="#c48b50"/><path d="M26 26.500C21 28.500 18.500 33 17.500 40C17 46 18.500 52 21 59.500H25V52C25.500 41 29 32 37 25.500C33 25 29.500 25.300 26 26.500Z" fill="#b27b44"/><circle cx="35.3" cy="54.200" r="4.300" fill="#fff"/><ellipse cx="35.3" cy="54.400" rx="1.900" ry="2.900" fill="#7b6649"/><circle cx="53.3" cy="54.200" r="4.300" fill="#fff"/><ellipse cx="53.3" cy="54.400" rx="1.900" ry="2.900" fill="#7b6649"/><path d="M31.500 48.500q4-4 8.500-1.500M49 47.500q4.500-2.800 8.500 0" stroke="#c48b50" stroke-width="1.500" fill="none" stroke-linecap="round"/><path d="M38.500 60.500q5.500 3.800 11 0" stroke="#8a6c4c" stroke-width="1.500" fill="none" stroke-linecap="round"/></g></svg><svg x="240.5" y="220.5" width="80" height="110" viewBox="0 0 80 110"><circle cx="38" cy="94" r="6.5" fill="#3498db"/><path d="M38 94L36 101" stroke="#3498db" stroke-width="13" fill="none"/><path d="M36.7 98.6L36 101" stroke="#2a80b9" stroke-width="13" fill="none"/><rect x="-8.5" y="0" width="16" height="4.6" rx="1" fill="#b37a42" transform="translate(36 101) rotate(-40)"/><circle cx="48" cy="94" r="6.5" fill="#3498db"/><path d="M48 94L54 100" stroke="#3498db" stroke-width="13" fill="none"/><path d="M52.2 98.2L54 100" stroke="#2a80b9" stroke-width="13" fill="none"/><rect x="-6.5" y="0" width="16" height="4.6" rx="1" fill="#b37a42" transform="translate(54 100) rotate(-15)"/><g transform="translate(-2 -2)"><polygon points="20,67.5 63,67.5 58.5,93.5 24.5,93.5" fill="#2ecc71"/><rect x="24.500" y="92.500" width="34" height="3.200" fill="#b37a42"/></g><path d="M59 72L67.5 62" stroke="#fde0b2" stroke-width="14" stroke-linecap="round" fill="none"/><circle cx="67.5" cy="62" r="8.0" fill="#fde0b2"/><circle cx="59" cy="72" r="8.25" fill="#2ecc71"/><path d="M59 72L62.2 68.2" stroke="#2ecc71" stroke-width="16.5" fill="none"/><path d="M60.6 70.1L62.2 68.2" stroke="#25a55b" stroke-width="16.5" fill="none"/><path d="M21 74L37 83" stroke="#fde0b2" stroke-width="13.5" stroke-linecap="round" fill="none"/><circle cx="37" cy="83" r="7.75" fill="#fde0b2"/><circle cx="21" cy="74" r="8.0" fill="#2ecc71"/><path d="M21 74L27.1 77.4" stroke="#2ecc71" stroke-width="16.0" fill="none"/><path d="M24.9 76.2L27.1 77.4" stroke="#25a55b" stroke-width="16.0" fill="none"/><g transform="translate(-2 2) translate(83.5 0) scale(-1 1)"><polygon points="31.500,66 50.500,66 48,72 34,72" fill="#e6c294"/><rect x="21" y="41.500" width="41.500" height="27" rx="3" fill="#fde0b2"/><path d="M65 14.500C65.500 25 66.500 38 64 49.500L62.500 43 42 42.500H29.500Q26 45.500 25 52V59.500H21C18.500 52 17 46 17.500 40C18.500 33 21 28.500 26 26.500C38 21.500 52 18 65 14.500Z" fill="#c48b50"/><path d="M26 26.500C21 28.500 18.500 33 17.500 40C17 46 18.500 52 21 59.500H25V52C25.500 41 29 32 37 25.500C33 25 29.500 25.300 26 26.500Z" fill="#b27b44"/><circle cx="35.3" cy="54.200" r="4.300" fill="#fff"/><ellipse cx="35.3" cy="54.400" rx="1.900" ry="2.900" fill="#7b6649"/><circle cx="53.3" cy="54.200" r="4.300" fill="#fff"/><ellipse cx="53.3" cy="54.400" rx="1.900" ry="2.900" fill="#7b6649"/><path d="M31.500 47q4-3 8-.4M49.500 46.800q4-2.600 8 .6" stroke="#c48b50" stroke-width="1.400" fill="none" stroke-linecap="round"/><path d="M38 58.500h11q-.6 5.600-5.500 5.600T38 58.500z" fill="#8a6c4c"/><rect x="40" y="58.500" width="6.500" height="2.800" fill="#fff"/></g></svg><svg x="320.5" y="220.5" width="80" height="110" viewBox="0 0 80 110"><circle cx="32.5" cy="96" r="7.5" fill="#3498db"/><path d="M32.5 96L32.5 105.5" stroke="#3498db" stroke-width="15" fill="none"/><path d="M32.5 103L32.5 105.5" stroke="#2a80b9" stroke-width="15" fill="none"/><rect x="-9.5" y="0" width="18" height="4.6" rx="1" fill="#b37a42" transform="translate(32.5 105.5) rotate(0)"/><circle cx="50.5" cy="96" r="7.5" fill="#3498db"/><path d="M50.5 96L50.5 105.5" stroke="#3498db" stroke-width="15" fill="none"/><path d="M50.5 103L50.5 105.5" stroke="#2a80b9" stroke-width="15" fill="none"/><rect x="-7.5" y="0" width="18" height="4.6" rx="1" fill="#b37a42" transform="translate(50.5 105.5) rotate(0)"/><g transform="translate(0 0)"><polygon points="20,67.5 63,67.5 58.5,93.5 24.5,93.5" fill="#2ecc71"/><rect x="24.500" y="92.500" width="34" height="3.200" fill="#b37a42"/></g><path d="M19.5 76L17.5 94" stroke="#fde0b2" stroke-width="13.5" stroke-linecap="round" fill="none"/><circle cx="17.5" cy="94" r="7.75" fill="#fde0b2"/><circle cx="19.5" cy="76" r="8.0" fill="#2ecc71"/><path d="M19.5 76L18.9 81.4" stroke="#2ecc71" stroke-width="16.0" fill="none"/><path d="M19.2 78.9L18.9 81.4" stroke="#25a55b" stroke-width="16.0" fill="none"/><path d="M63.5 76L65.5 94" stroke="#fde0b2" stroke-width="13.5" stroke-linecap="round" fill="none"/><circle cx="65.5" cy="94" r="7.75" fill="#fde0b2"/><circle cx="63.5" cy="76" r="8.0" fill="#2ecc71"/><path d="M63.5 76L64.1 81.4" stroke="#2ecc71" stroke-width="16.0" fill="none"/><path d="M63.8 78.9L64.1 81.4" stroke="#25a55b" stroke-width="16.0" fill="none"/><g transform="translate(0 0)"><rect x="22" y="43" width="40" height="25.500" rx="3" fill="#fde0b2"/><path d="M65 14.500C51 18 33 22 24 29C13 38 16 58 29 65.500C42 72 59 67 64 56C68 46 66 30 65 14.500Z" fill="#b27b44"/><path d="M65 14.500C53 18.500 36 23 28 30C40 28 56 30 65.500 41Z" fill="#c48b50"/></g></svg><svg x="400.5" y="220.5" width="80" height="110" viewBox="0 0 80 110"><circle cx="33.5" cy="96" r="7.5" fill="#3498db"/><path d="M33.5 96L33.5 105.5" stroke="#3498db" stroke-width="15" fill="none"/><path d="M33.5 103L33.5 105.5" stroke="#2a80b9" stroke-width="15" fill="none"/><rect x="-9.5" y="0" width="18" height="4.6" rx="1" fill="#b37a42" transform="translate(33.5 105.5) rotate(0)"/><circle cx="49.5" cy="96" r="7.5" fill="#3498db"/><path d="M49.5 96L49.5 105.5" stroke="#3498db" stroke-width="15" fill="none"/><path d="M49.5 103L49.5 105.5" stroke="#2a80b9" stroke-width="15" fill="none"/><rect x="-7.5" y="0" width="18" height="4.6" rx="1" fill="#b37a42" transform="translate(49.5 105.5) rotate(0)"/><g transform="translate(0 0)"><polygon points="20,67.5 63,67.5 58.5,93.5 24.5,93.5" fill="#2ecc71"/><rect x="24.500" y="92.500" width="34" height="3.200" fill="#b37a42"/></g><path d="M21 76L19.5 89" stroke="#fde0b2" stroke-width="13.5" stroke-linecap="round" fill="none"/><circle cx="19.5" cy="89" r="7.75" fill="#fde0b2"/><circle cx="21" cy="76" r="8.0" fill="#2ecc71"/><path d="M21 76L20.4 80.9" stroke="#2ecc71" stroke-width="16.0" fill="none"/><path d="M20.7 78.5L20.4 80.9" stroke="#25a55b" stroke-width="16.0" fill="none"/><path d="M63 76L65 92" stroke="#fde0b2" stroke-width="11" stroke-linecap="round" fill="none"/><circle cx="65" cy="92" r="6.5" fill="#fde0b2"/><circle cx="63" cy="76" r="6.75" fill="#2ecc71"/><path d="M63 76L63.8 82.1" stroke="#2ecc71" stroke-width="13.5" fill="none"/><path d="M63.4 79.6L63.8 82.1" stroke="#25a55b" stroke-width="13.5" fill="none"/><g transform="translate(1 0)"><polygon points="31.500,66 50.500,66 48,72 34,72" fill="#e6c294"/><rect x="21" y="41.500" width="41.500" height="27" rx="3" fill="#fde0b2"/><path d="M65 14.500C65.500 25 66.500 38 64 49.500L62.500 43 42 42.500H29.500Q26 45.500 25 52V59.500H21C18.500 52 17 46 17.500 40C18.500 33 21 28.500 26 26.500C38 21.500 52 18 65 14.500Z" fill="#c48b50"/><path d="M26 26.500C21 28.500 18.500 33 17.500 40C17 46 18.500 52 21 59.500H25V52C25.500 41 29 32 37 25.500C33 25 29.500 25.300 26 26.500Z" fill="#b27b44"/><circle cx="35.3" cy="54.200" r="4.300" fill="#fff"/><ellipse cx="35.3" cy="54.400" rx="1.900" ry="2.900" fill="#7b6649"/><circle cx="53.3" cy="54.200" r="4.300" fill="#fff"/><ellipse cx="53.3" cy="54.400" rx="1.900" ry="2.900" fill="#7b6649"/><path d="M31.500 48.500q4-4 8.500-1.500M49 47.500q4.500-2.800 8.500 0" stroke="#c48b50" stroke-width="1.500" fill="none" stroke-linecap="round"/><path d="M38.500 60.500q5.500 3.800 11 0" stroke="#8a6c4c" stroke-width="1.500" fill="none" stroke-linecap="round"/></g></svg><path d="M0.5 0V331M80.5 0V331M160.5 0V331M240.5 0V331M320.5 0V331M400.5 0V331M480.5 0V331M560.5 0V331M640.5 0V331M720.5 0V331M0 0.5H722M0 110.5H722M0 220.5H722M0 330.5H722" stroke="#6a6a6a" stroke-width="1" fill="none"/></svg>
<div class="ic" style="left:1322.0px;top:211.0px;width:20px;height:20px;"><svg width="20" height="20" viewBox="0 0 16 16" style="display:block;"><path d="M5.500 2l5 6-5 6" fill="none" stroke="#c8c8c8" stroke-width="1.500" stroke-linecap="round" stroke-linejoin="round"/></svg></div>
<div class="t tree" style="left:1361px;top:207px;letter-spacing:0.162px;">Horizontal</div>
<div class="b input" style="left:1463px;top:201px;width:87px;height:36px;"></div>
<div class="t tree" style="left:1473px;top:207px;">9</div>
<div class="ic" style="left:1553.5px;top:201.5px;width:16px;height:16px;"><svg width="16" height="16" viewBox="0 0 16 16" style="display:block;"><path d="M3.5 10.500l4.500-4.500 4.500 4.500" fill="none" stroke="#cccccc" stroke-width="2" stroke-linecap="round" stroke-linejoin="round"/></svg></div>
<div class="ic" style="left:1553.5px;top:220.0px;width:16px;height:16px;"><svg width="16" height="16" viewBox="0 0 16 16" style="display:block;"><path d="M3.5 6l4.500 4.500L12.500 6" fill="none" stroke="#cccccc" stroke-width="2" stroke-linecap="round" stroke-linejoin="round"/></svg></div>
<div class="t tree" style="left:1361px;top:248px;letter-spacing:0.281px;">Vertical</div>
<div class="b input" style="left:1463px;top:242px;width:87px;height:36px;"></div>
<div class="t tree" style="left:1473px;top:248px;">3</div>
<div class="ic" style="left:1553.5px;top:242.5px;width:16px;height:16px;"><svg width="16" height="16" viewBox="0 0 16 16" style="display:block;"><path d="M3.5 10.500l4.500-4.500 4.500 4.500" fill="none" stroke="#cccccc" stroke-width="2" stroke-linecap="round" stroke-linejoin="round"/></svg></div>
<div class="ic" style="left:1553.5px;top:261.0px;width:16px;height:16px;"><svg width="16" height="16" viewBox="0 0 16 16" style="display:block;"><path d="M3.5 6l4.500 4.500L12.500 6" fill="none" stroke="#cccccc" stroke-width="2" stroke-linecap="round" stroke-linejoin="round"/></svg></div>
<div class="t tree" style="left:1361px;top:289px;">Size</div>
<div class="b input" style="left:1463px;top:283px;width:87px;height:36px;"></div>
<div class="t tree" style="left:1473px;top:289px;letter-spacing:0.367px;">80 px</div>
<div class="ic" style="left:1553.5px;top:283.5px;width:16px;height:16px;"><svg width="16" height="16" viewBox="0 0 16 16" style="display:block;"><path d="M3.5 10.500l4.500-4.500 4.500 4.500" fill="none" stroke="#cccccc" stroke-width="2" stroke-linecap="round" stroke-linejoin="round"/></svg></div>
<div class="ic" style="left:1553.5px;top:302.0px;width:16px;height:16px;"><svg width="16" height="16" viewBox="0 0 16 16" style="display:block;"><path d="M3.5 6l4.500 4.500L12.500 6" fill="none" stroke="#cccccc" stroke-width="2" stroke-linecap="round" stroke-linejoin="round"/></svg></div>
<div class="b input" style="left:1463px;top:324px;width:87px;height:36px;"></div>
<div class="t tree" style="left:1473px;top:330px;letter-spacing:0.758px;">110 px</div>
<div class="ic" style="left:1553.5px;top:324.5px;width:16px;height:16px;"><svg width="16" height="16" viewBox="0 0 16 16" style="display:block;"><path d="M3.5 10.500l4.500-4.500 4.500 4.500" fill="none" stroke="#cccccc" stroke-width="2" stroke-linecap="round" stroke-linejoin="round"/></svg></div>
<div class="ic" style="left:1553.5px;top:343.0px;width:16px;height:16px;"><svg width="16" height="16" viewBox="0 0 16 16" style="display:block;"><path d="M3.5 6l4.500 4.500L12.500 6" fill="none" stroke="#cccccc" stroke-width="2" stroke-linecap="round" stroke-linejoin="round"/></svg></div>
<div class="t tree" style="left:1361px;top:371px;">Separation</div>
<div class="b input" style="left:1463px;top:365px;width:87px;height:36px;"></div>
<div class="t tree" style="left:1473px;top:371px;">0 px</div>
<div class="ic" style="left:1553.5px;top:365.5px;width:16px;height:16px;"><svg width="16" height="16" viewBox="0 0 16 16" style="display:block;"><path d="M3.5 10.500l4.500-4.500 4.500 4.500" fill="none" stroke="#cccccc" stroke-width="2" stroke-linecap="round" stroke-linejoin="round"/></svg></div>
<div class="ic" style="left:1553.5px;top:384.0px;width:16px;height:16px;"><svg width="16" height="16" viewBox="0 0 16 16" style="display:block;"><path d="M3.5 6l4.500 4.500L12.500 6" fill="none" stroke="#5c5c5c" stroke-width="2" stroke-linecap="round" stroke-linejoin="round"/></svg></div>
<div class="b input" style="left:1463px;top:406px;width:87px;height:36px;"></div>
<div class="t tree" style="left:1473px;top:412px;">0 px</div>
<div class="ic" style="left:1553.5px;top:406.5px;width:16px;height:16px;"><svg width="16" height="16" viewBox="0 0 16 16" style="display:block;"><path d="M3.5 10.500l4.500-4.500 4.500 4.500" fill="none" stroke="#cccccc" stroke-width="2" stroke-linecap="round" stroke-linejoin="round"/></svg></div>
<div class="ic" style="left:1553.5px;top:425.0px;width:16px;height:16px;"><svg width="16" height="16" viewBox="0 0 16 16" style="display:block;"><path d="M3.5 6l4.500 4.500L12.500 6" fill="none" stroke="#5c5c5c" stroke-width="2" stroke-linecap="round" stroke-linejoin="round"/></svg></div>
<div class="t tree" style="left:1361px;top:453px;">Offset</div>
<div class="b input" style="left:1463px;top:447px;width:87px;height:36px;"></div>
<div class="t tree" style="left:1473px;top:453px;">0 px</div>
<div class="ic" style="left:1553.5px;top:447.5px;width:16px;height:16px;"><svg width="16" height="16" viewBox="0 0 16 16" style="display:block;"><path d="M3.5 10.500l4.500-4.500 4.500 4.500" fill="none" stroke="#cccccc" stroke-width="2" stroke-linecap="round" stroke-linejoin="round"/></svg></div>
<div class="ic" style="left:1553.5px;top:466.0px;width:16px;height:16px;"><svg width="16" height="16" viewBox="0 0 16 16" style="display:block;"><path d="M3.5 6l4.500 4.500L12.500 6" fill="none" stroke="#5c5c5c" stroke-width="2" stroke-linecap="round" stroke-linejoin="round"/></svg></div>
<div class="b input" style="left:1463px;top:488px;width:87px;height:36px;"></div>
<div class="t tree" style="left:1473px;top:494px;">0 px</div>
<div class="ic" style="left:1553.5px;top:488.5px;width:16px;height:16px;"><svg width="16" height="16" viewBox="0 0 16 16" style="display:block;"><path d="M3.5 10.500l4.500-4.500 4.500 4.500" fill="none" stroke="#cccccc" stroke-width="2" stroke-linecap="round" stroke-linejoin="round"/></svg></div>
<div class="ic" style="left:1553.5px;top:507.0px;width:16px;height:16px;"><svg width="16" height="16" viewBox="0 0 16 16" style="display:block;"><path d="M3.5 6l4.500 4.500L12.500 6" fill="none" stroke="#5c5c5c" stroke-width="2" stroke-linecap="round" stroke-linejoin="round"/></svg></div>
<div class="b btn" style="left:1351px;top:529px;width:221px;height:41px;"></div>
<div class="t tree" style="left:1420px;top:537px;">Auto Slice</div>
<div class="b " style="left:650px;top:837px;width:182px;height:42px;background:#383838;border-radius:6px"></div>
<div class="t tree" style="left:660px;top:846px;letter-spacing:-0.122px;color:#7c7c7c">No Frames Selected</div>
<div class="b btn" style="left:1139px;top:837px;width:131px;height:42px;"></div>
<div class="t tree" style="left:1176px;top:846px;">Cancel</div>
</div>
</body></html>
